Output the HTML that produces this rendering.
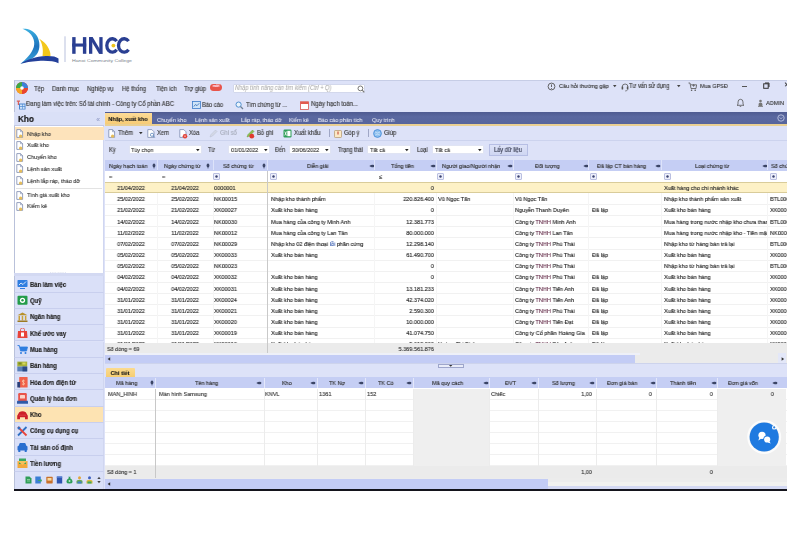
<!DOCTYPE html>
<html><head><meta charset="utf-8">
<style>
*{margin:0;padding:0;box-sizing:border-box}
html,body{width:800px;height:533px;overflow:hidden;background:#fff;font-family:"Liberation Sans",sans-serif;color:#2b2b2b}
.a{position:absolute}
.t{position:absolute;white-space:nowrap;line-height:1;-webkit-text-stroke:0.15px currentColor;will-change:transform}
</style></head><body>

<svg class="a" style="left:0;top:0" width="150" height="70" viewBox="0 0 150 70">
  <defs><linearGradient id="bl" x1="0" y1="0" x2="0" y2="1"><stop offset="0" stop-color="#3bb0e0"/><stop offset="0.5" stop-color="#1d72bd"/><stop offset="1" stop-color="#3aa5dc"/></linearGradient></defs>
  <path d="M22.5 28.8 C27 28.5 33 29.5 37 36 C40 41 40.5 49 37 54 C33 59 27 62 20.5 63.8 C26 59 31.5 54 33.8 47 C35.5 41 33 33 22.5 28.8 Z" fill="url(#bl)"/>
  <path d="M39 38.5 C45 42 49 47 50.3 53 L50.5 56 L42.5 56 C43.5 50 42.5 43 39 38.5 Z" fill="#f3c71a"/>
  <path d="M20.5 63.8 C27 59.5 36 56.5 46 56 C52 55.8 56 56.5 58.5 58.5 L58.5 63.2 C54 61 46 60.5 38 61 C31 61.5 25 62.5 20.5 63.8 Z" fill="#24409a"/>
  <rect x="64.5" y="36.3" width="1" height="25.7" fill="#b9c1de"/>
  <g fill="#2a3f92">
    <rect x="72.2" y="37.1" width="3.4" height="16.7"/><rect x="82.9" y="37.1" width="3.4" height="16.7"/><rect x="72.2" y="43.5" width="14" height="3.1"/>
    <rect x="89" y="37.1" width="3.3" height="16.7"/><rect x="99.3" y="37.1" width="3.3" height="16.7"/><path d="M89 37.1 H92.6 L102.6 53.8 H99 Z"/>
  </g>
  <path d="M116.69 41.14 A5.60 6.70 0 1 0 116.69 49.76" fill="none" stroke="#2a3f92" stroke-width="3.3"/><path d="M128.57 41.14 A5.70 6.70 0 1 0 128.57 49.76" fill="none" stroke="#2a3f92" stroke-width="3.3"/>
  <circle cx="113.4" cy="45.6" r="1.9" fill="#f0c419"/>
  <text x="72" y="61.5" font-family="Liberation Sans" font-size="4.2" fill="#7a7f8c" textLength="60" lengthAdjust="spacingAndGlyphs">Hanoi Community College</text>
</svg>

<div class="a" style="left:0;top:0;width:786.6px;height:533px;overflow:hidden">
<div class="a" style="left:14px;top:80px;width:773px;height:409px;background:#dde2f8;border-left:1px solid #b9c1da;border-top:0.7px solid #c6cde6"></div>
<svg class="a" style="left:15px;top:81px" width="14" height="14" viewBox="0 0 14 14"><circle cx="7" cy="7" r="6" fill="#e9452f"/>
<path d="M7 7 L7 1 A6 6 0 0 1 13 7 Z" fill="#3b82d9"/>
<path d="M7 7 L13 7 A6 6 0 0 1 7 13 Z" fill="#e9452f"/>
<path d="M7 7 L7 13 A6 6 0 0 1 1 7 Z" fill="#f5a623"/>
<path d="M7 7 L1 7 A6 6 0 0 1 7 1 Z" fill="#3aaa49"/>
<circle cx="7" cy="7" r="1.8" fill="#fff"/></svg>
<div class="t" style="top:85.50px;font-size:6.61px;color:#3a3a3a;left:34.40px;transform-origin:0 50%;transform:scaleX(0.8929);">Tệp</div>
<div class="t" style="top:85.50px;font-size:6.61px;color:#3a3a3a;left:51.60px;transform-origin:0 50%;transform:scaleX(0.8929);">Danh mục</div>
<div class="t" style="top:85.50px;font-size:6.61px;color:#3a3a3a;left:86.50px;transform-origin:0 50%;transform:scaleX(0.8929);">Nghiệp vụ</div>
<div class="t" style="top:85.50px;font-size:6.61px;color:#3a3a3a;left:122.00px;transform-origin:0 50%;transform:scaleX(0.8929);">Hệ thống</div>
<div class="t" style="top:85.50px;font-size:6.61px;color:#3a3a3a;left:156.00px;transform-origin:0 50%;transform:scaleX(0.8929);">Tiện ích</div>
<div class="t" style="top:85.50px;font-size:6.61px;color:#3a3a3a;left:184.00px;transform-origin:0 50%;transform:scaleX(0.8929);">Trợ giúp</div>
<div class="a" style="left:209.6px;top:83.8px;width:12.6px;height:6.8px;background:#e8544b;border-radius:3.4px"></div>
<div class="t" style="top:85.28px;font-size:3.81px;color:#fde;font-weight:bold;left:65.90px;width:300px;text-align:center;transform-origin:50% 50%;transform:scaleX(0.8929);">mới</div>
<div class="a" style="left:232.8px;top:83.6px;width:132.2px;height:9.6px;background:#fff;border:0.7px solid #d3d8ec;border-radius:1px"></div>
<div class="t" style="top:85.28px;font-size:6.27px;color:#a9a9a9;font-style:italic;left:235.00px;transform-origin:0 50%;transform:scaleX(0.8929);-webkit-text-stroke:0.05px currentColor;">Nhập tính năng cần tìm kiếm (Ctrl + Q)</div>
<svg class="a" style="left:357px;top:84.5px" width="8" height="8" viewBox="0 0 8 8"><circle cx="3.4" cy="3.4" r="2.4" fill="none" stroke="#777" stroke-width="1"/><path d="M5.2 5.2 L7.3 7.3" stroke="#777" stroke-width="1.2"/></svg>
<svg class="a" style="left:546.5px;top:82.2px" width="9" height="9" viewBox="0 0 9 9"><circle cx="4.5" cy="4.5" r="3.4" fill="none" stroke="#555" stroke-width="0.9"/><path d="M4.5 2.4 V5" stroke="#555" stroke-width="0.9"/><circle cx="4.5" cy="6.4" r="0.5" fill="#555"/></svg>
<div class="t" style="top:83.31px;font-size:6.22px;color:#3a3a3a;left:558.50px;transform-origin:0 50%;transform:scaleX(0.8929);">Câu hỏi thường gặp</div>
<svg class="a" style="left:613px;top:84.8px" width="4" height="3" viewBox="0 0 4 3"><path d="M0 0 H3.5 L1.75 2.2Z" fill="#444"/></svg>
<svg class="a" style="left:620.5px;top:81.8px" width="8" height="10" viewBox="0 0 8 10"><path d="M1.2 5 A2.9 3 0 0 1 7 5" fill="none" stroke="#555" stroke-width="0.8"/><rect x="0.6" y="4.6" width="1.6" height="3" rx="0.5" fill="#555"/><rect x="5.8" y="4.6" width="1.6" height="3" rx="0.5" fill="#555"/><path d="M6.6 7.6 Q6.6 9 4 9" fill="none" stroke="#555" stroke-width="0.6"/></svg>
<div class="t" style="top:83.23px;font-size:6.35px;color:#3a3a3a;left:629.40px;transform-origin:0 50%;transform:scaleX(0.8929);">Tư vấn sử dụng</div>
<svg class="a" style="left:676.5px;top:84.8px" width="4" height="3" viewBox="0 0 4 3"><path d="M0 0 H3.5 L1.75 2.2Z" fill="#444"/></svg>
<svg class="a" style="left:687.5px;top:81.5px" width="9" height="10" viewBox="0 0 9 10"><path d="M0.5 1 H2 L3 6.5 H8 L8.6 2.8 H2.6" fill="none" stroke="#555" stroke-width="0.8"/><circle cx="3.6" cy="8.2" r="0.8" fill="#555"/><circle cx="7.2" cy="8.2" r="0.8" fill="#555"/><path d="M5.6 2 V5 M4.3 3.5 H6.9" stroke="#555" stroke-width="0.6"/></svg>
<div class="t" style="top:83.34px;font-size:6.16px;color:#3a3a3a;left:700.00px;transform-origin:0 50%;transform:scaleX(0.8929);">Mua GPSĐ</div>
<div class="a" style="left:742px;top:85.5px;width:5px;height:0.9px;background:#555;"></div>
<svg class="a" style="left:762.5px;top:82.3px" width="7" height="7" viewBox="0 0 7 7"><rect x="0.7" y="1.8" width="4.5" height="4.5" fill="none" stroke="#333" stroke-width="1"/><path d="M2 1 H6 V5" fill="none" stroke="#333" stroke-width="1"/></svg>
<div class="t" style="top:82.24px;font-size:6.72px;color:#333;left:783.60px;transform-origin:0 50%;transform:scaleX(0.8929);">✕</div>
<svg class="a" style="left:15.5px;top:100px" width="10" height="10" viewBox="0 0 10 10"><path d="M0.8 0.5 H4 V1.8 H3 V5 H1.8 V1.8 H0.8Z" fill="#d9605a"/><rect x="3" y="3.5" width="6.5" height="6" fill="#4a86d0"/><rect x="4" y="4.5" width="2" height="1.8" fill="#cfe3fb"/><rect x="6.6" y="4.5" width="2" height="1.8" fill="#cfe3fb"/><rect x="4" y="7" width="2" height="1.8" fill="#cfe3fb"/><rect x="6.6" y="7" width="2" height="1.8" fill="#cfe3fb"/></svg>
<div class="t" style="top:101.46px;font-size:6.68px;color:#3a3a3a;left:26.00px;transform-origin:0 50%;transform:scaleX(0.8929);">Đang làm việc trên: Sổ tài chính - Công ty Cổ phần ABC</div>
<svg class="a" style="left:191.5px;top:101px" width="9" height="8" viewBox="0 0 9 8"><rect x="0.5" y="0.5" width="8" height="7" fill="#cfe3f7" stroke="#3d7cc9" stroke-width="0.8"/><path d="M1.8 5.5 L3.5 3.5 L5 4.7 L7.2 2.3" fill="none" stroke="#2d67b5" stroke-width="0.8"/></svg>
<div class="t" style="top:101.60px;font-size:6.41px;color:#3a3a3a;left:202.00px;transform-origin:0 50%;transform:scaleX(0.8929);">Báo cáo</div>
<svg class="a" style="left:235px;top:100.5px" width="9" height="9" viewBox="0 0 9 9"><circle cx="3.6" cy="3.6" r="2.6" fill="#eaf3fb" stroke="#4f8fcf" stroke-width="1"/><path d="M5.5 5.5 L8 8" stroke="#6d7f96" stroke-width="1.3"/></svg>
<div class="t" style="top:101.60px;font-size:6.41px;color:#3a3a3a;left:246.00px;transform-origin:0 50%;transform:scaleX(0.8929);">Tìm chứng từ ...</div>
<svg class="a" style="left:299.5px;top:100.7px" width="9" height="9" viewBox="0 0 9 9"><rect x="0.5" y="0.8" width="8" height="7.6" fill="#fff" stroke="#d9534f" stroke-width="0.8"/><rect x="0.5" y="0.8" width="8" height="2.2" fill="#e25a4f"/></svg>
<div class="t" style="top:101.44px;font-size:6.72px;color:#3a3a3a;left:310.70px;transform-origin:0 50%;transform:scaleX(0.8929);">Ngày hạch toán...</div>
<svg class="a" style="left:735.5px;top:98.3px" width="9" height="9" viewBox="0 0 9 9"><path d="M2 6.5 V4 A2.5 2.7 0 0 1 7 4 V6.5 L8 7.3 H1 Z" fill="none" stroke="#555" stroke-width="0.8"/><path d="M3.6 8 A1 1 0 0 0 5.4 8" fill="none" stroke="#555" stroke-width="0.7"/></svg>
<svg class="a" style="left:757.5px;top:99.3px" width="5" height="8" viewBox="0 0 5 8"><circle cx="2.5" cy="2" r="1.3" fill="#777"/><path d="M0.6 7 V5 A1.9 1.5 0 0 1 4.4 5 V7Z" fill="#777"/><rect x="0" y="7" width="5" height="0.8" fill="#777"/></svg>
<div class="t" style="top:100.08px;font-size:6.26px;color:#3a3a3a;left:766.00px;transform-origin:0 50%;transform:scaleX(0.8929);">ADMIN</div>
<div class="a" style="left:14px;top:112px;width:90px;height:14px;background:#dae0f7;"></div>
<div class="t" style="top:115.13px;font-size:9.18px;color:#111;font-weight:bold;left:17.50px;transform-origin:0 50%;transform:scaleX(0.8929);">Kho</div>
<div class="t" style="top:116.74px;font-size:6.72px;color:#9aa3cc;left:-51.70px;width:300px;text-align:center;transform-origin:50% 50%;transform:scaleX(0.8929);">«</div>
<div class="a" style="left:14px;top:126px;width:90px;height:146.5px;background:#fff;border-left:1px solid #b9c1da;border-right:1px solid #d0d6f0"></div>
<div class="a" style="left:15px;top:127.4px;width:88.5px;height:12.3px;background:#fde3bb;"></div>
<div class="a" style="left:14px;top:125.2px;width:90px;height:0.8px;background:#c3cae6;"></div>
<svg class="a" style="left:16px;top:129.4px" width="8" height="9" viewBox="0 0 8 9"><path d="M0.8 0.6 H4.5 L6.6 2.7 V8.4 H0.8 Z" fill="#fff" stroke="#7584aa" stroke-width="0.75"/><path d="M4.5 0.6 V2.7 H6.6" fill="none" stroke="#7584aa" stroke-width="0.6"/><circle cx="4.6" cy="7.2" r="1.6" fill="#e6bd5a"/></svg>
<div class="t" style="top:130.71px;font-size:6.22px;color:#3a3a3a;left:26.90px;transform-origin:0 50%;transform:scaleX(0.8929);">Nhập kho</div>
<svg class="a" style="left:16px;top:141.0px" width="8" height="9" viewBox="0 0 8 9"><path d="M0.8 0.6 H4.5 L6.6 2.7 V8.4 H0.8 Z" fill="#fff" stroke="#7584aa" stroke-width="0.75"/><path d="M4.5 0.6 V2.7 H6.6" fill="none" stroke="#7584aa" stroke-width="0.6"/><circle cx="4.6" cy="7.2" r="1.6" fill="#e6bd5a"/></svg>
<div class="t" style="top:142.31px;font-size:6.22px;color:#3a3a3a;left:26.90px;transform-origin:0 50%;transform:scaleX(0.8929);">Xuất kho</div>
<svg class="a" style="left:16px;top:152.9px" width="8" height="9" viewBox="0 0 8 9"><path d="M0.8 0.6 H4.5 L6.6 2.7 V8.4 H0.8 Z" fill="#fff" stroke="#7584aa" stroke-width="0.75"/><path d="M4.5 0.6 V2.7 H6.6" fill="none" stroke="#7584aa" stroke-width="0.6"/><circle cx="4.6" cy="7.2" r="1.6" fill="#e6bd5a"/></svg>
<div class="t" style="top:154.21px;font-size:6.22px;color:#3a3a3a;left:26.90px;transform-origin:0 50%;transform:scaleX(0.8929);">Chuyển kho</div>
<svg class="a" style="left:16px;top:164.4px" width="8" height="9" viewBox="0 0 8 9"><path d="M0.8 0.6 H4.5 L6.6 2.7 V8.4 H0.8 Z" fill="#fff" stroke="#7584aa" stroke-width="0.75"/><path d="M4.5 0.6 V2.7 H6.6" fill="none" stroke="#7584aa" stroke-width="0.6"/><circle cx="4.6" cy="7.2" r="1.6" fill="#e6bd5a"/></svg>
<div class="t" style="top:165.71px;font-size:6.22px;color:#3a3a3a;left:26.90px;transform-origin:0 50%;transform:scaleX(0.8929);">Lệnh sản xuất</div>
<svg class="a" style="left:16px;top:176.4px" width="8" height="9" viewBox="0 0 8 9"><path d="M0.8 0.6 H4.5 L6.6 2.7 V8.4 H0.8 Z" fill="#fff" stroke="#7584aa" stroke-width="0.75"/><path d="M4.5 0.6 V2.7 H6.6" fill="none" stroke="#7584aa" stroke-width="0.6"/><circle cx="4.6" cy="7.2" r="1.6" fill="#e6bd5a"/></svg>
<div class="t" style="top:177.71px;font-size:6.22px;color:#3a3a3a;left:26.90px;transform-origin:0 50%;transform:scaleX(0.8929);">Lệnh lắp ráp, tháo dỡ</div>
<svg class="a" style="left:16px;top:190.8px" width="8" height="9" viewBox="0 0 8 9"><path d="M0.8 0.6 H4.5 L6.6 2.7 V8.4 H0.8 Z" fill="#fff" stroke="#7584aa" stroke-width="0.75"/><path d="M4.5 0.6 V2.7 H6.6" fill="none" stroke="#7584aa" stroke-width="0.6"/><circle cx="4.6" cy="7.2" r="1.6" fill="#e6bd5a"/></svg>
<div class="t" style="top:192.11px;font-size:6.22px;color:#3a3a3a;left:26.90px;transform-origin:0 50%;transform:scaleX(0.8929);">Tính giá xuất kho</div>
<svg class="a" style="left:16px;top:202.0px" width="8" height="9" viewBox="0 0 8 9"><path d="M0.8 0.6 H4.5 L6.6 2.7 V8.4 H0.8 Z" fill="#fff" stroke="#7584aa" stroke-width="0.75"/><path d="M4.5 0.6 V2.7 H6.6" fill="none" stroke="#7584aa" stroke-width="0.6"/><circle cx="4.6" cy="7.2" r="1.6" fill="#e6bd5a"/></svg>
<div class="t" style="top:203.31px;font-size:6.22px;color:#3a3a3a;left:26.90px;transform-origin:0 50%;transform:scaleX(0.8929);">Kiểm kê</div>
<div class="a" style="left:16px;top:187.8px;width:86px;height:0.6px;background:#e3e3e3;"></div>
<div class="a" style="left:14px;top:272.5px;width:90px;height:3.8px;background:#d3d9f2;"></div>
<div class="t" style="top:272.42px;font-size:3.36px;color:#a9b1d6;left:-92.00px;width:300px;text-align:center;transform-origin:50% 50%;transform:scaleX(0.8929);">· · · · · · · · ·</div>
<div class="a" style="left:14px;top:276.3px;width:90px;height:16.3px;background:#dae0f8;border-left:1px solid #b9c1da;border-right:1px solid #d0d6f0;border-bottom:0.6px solid #c8cfee"></div>
<svg class="a" style="left:16.5px;top:279.1px" width="11" height="11" viewBox="0 0 11 11"><rect x="0.5" y="1" width="10" height="7" rx="0.8" fill="#2f7ee0"/><path d="M2 6 L4 4 L6 5.5 L9 2.5" fill="none" stroke="#fff" stroke-width="0.8"/><path d="M3 9.5 H8" stroke="#2f7ee0" stroke-width="1"/></svg>
<div class="t" style="top:281.70px;font-size:6.61px;color:#222;font-weight:bold;left:30.30px;transform-origin:0 50%;transform:scaleX(0.8929);">Bàn làm việc</div>
<div class="a" style="left:14px;top:292.6px;width:90px;height:16.3px;background:#dae0f8;border-left:1px solid #b9c1da;border-right:1px solid #d0d6f0;border-bottom:0.6px solid #c8cfee"></div>
<svg class="a" style="left:16.5px;top:295.4px" width="11" height="11" viewBox="0 0 11 11"><rect x="0.5" y="0.8" width="10" height="9" rx="1" fill="#239c4a"/><circle cx="5.5" cy="5.3" r="2.6" fill="#fff"/><circle cx="5.5" cy="5.3" r="1.2" fill="#239c4a"/></svg>
<div class="t" style="top:298.00px;font-size:6.61px;color:#222;font-weight:bold;left:30.30px;transform-origin:0 50%;transform:scaleX(0.8929);">Quỹ</div>
<div class="a" style="left:14px;top:308.9px;width:90px;height:16.3px;background:#dae0f8;border-left:1px solid #b9c1da;border-right:1px solid #d0d6f0;border-bottom:0.6px solid #c8cfee"></div>
<svg class="a" style="left:16.5px;top:311.7px" width="11" height="11" viewBox="0 0 11 11"><path d="M0.5 3.3 L5.5 0.5 L10.5 3.3 Z" fill="#b8902c"/><rect x="1.5" y="3.8" width="1.5" height="4.5" fill="#c9a23a"/><rect x="4.7" y="3.8" width="1.5" height="4.5" fill="#c9a23a"/><rect x="7.9" y="3.8" width="1.5" height="4.5" fill="#c9a23a"/><rect x="0.5" y="8.5" width="10" height="1.5" fill="#9c7a22"/></svg>
<div class="t" style="top:314.30px;font-size:6.61px;color:#222;font-weight:bold;left:30.30px;transform-origin:0 50%;transform:scaleX(0.8929);">Ngân hàng</div>
<div class="a" style="left:14px;top:325.2px;width:90px;height:16.3px;background:#dae0f8;border-left:1px solid #b9c1da;border-right:1px solid #d0d6f0;border-bottom:0.6px solid #c8cfee"></div>
<svg class="a" style="left:16.5px;top:328.0px" width="11" height="11" viewBox="0 0 11 11"><path d="M1 3 H10 L10.5 10 H0.5 Z" fill="#e8433a"/><path d="M3.5 3 V1.5 A2 1.5 0 0 1 7.5 1.5 V3" fill="none" stroke="#e8433a" stroke-width="0.8"/><rect x="4" y="4.5" width="3" height="4" fill="#fff"/></svg>
<div class="t" style="top:330.60px;font-size:6.61px;color:#222;font-weight:bold;left:30.30px;transform-origin:0 50%;transform:scaleX(0.8929);">Khế ước vay</div>
<div class="a" style="left:14px;top:341.5px;width:90px;height:16.3px;background:#dae0f8;border-left:1px solid #b9c1da;border-right:1px solid #d0d6f0;border-bottom:0.6px solid #c8cfee"></div>
<svg class="a" style="left:16.5px;top:344.3px" width="11" height="11" viewBox="0 0 11 11"><path d="M0.5 1.5 H2.3 L3.5 7 H9.5 L10.5 3 H3" fill="#2f7ee0" stroke="#2f7ee0" stroke-width="0.8"/><circle cx="4" cy="9" r="1" fill="#2f7ee0"/><circle cx="8.5" cy="9" r="1" fill="#2f7ee0"/></svg>
<div class="t" style="top:346.90px;font-size:6.61px;color:#222;font-weight:bold;left:30.30px;transform-origin:0 50%;transform:scaleX(0.8929);">Mua hàng</div>
<div class="a" style="left:14px;top:357.8px;width:90px;height:16.3px;background:#dae0f8;border-left:1px solid #b9c1da;border-right:1px solid #d0d6f0;border-bottom:0.6px solid #c8cfee"></div>
<svg class="a" style="left:16.5px;top:360.6px" width="11" height="11" viewBox="0 0 11 11"><rect x="0.3" y="0.6" width="9.9" height="5" fill="#a9b23a"/><rect x="1.5" y="1.5" width="3" height="2" fill="#7a8a20"/><rect x="5.5" y="1.5" width="3" height="2" fill="#d5d860"/><rect x="0.3" y="5.6" width="9.9" height="4.8" fill="#5b80b8"/><rect x="5.5" y="5.6" width="4.7" height="4.8" fill="#2b4a88"/></svg>
<div class="t" style="top:363.20px;font-size:6.61px;color:#222;font-weight:bold;left:30.30px;transform-origin:0 50%;transform:scaleX(0.8929);">Bán hàng</div>
<div class="a" style="left:14px;top:374.1px;width:90px;height:16.3px;background:#dae0f8;border-left:1px solid #b9c1da;border-right:1px solid #d0d6f0;border-bottom:0.6px solid #c8cfee"></div>
<svg class="a" style="left:16.5px;top:376.9px" width="11" height="11" viewBox="0 0 11 11"><rect x="2.2" y="0" width="8.4" height="10.5" rx="0.6" fill="#f0604a"/><path d="M6.4 2.5 V8.5 M7.8 4 Q6.4 3 5 4 Q6.4 5.5 7.8 7 Q6.4 8 5 7" fill="none" stroke="#fbd0b0" stroke-width="0.7"/><rect x="0.3" y="5" width="2.8" height="5.5" fill="#2b3f7a"/></svg>
<div class="t" style="top:379.50px;font-size:6.61px;color:#222;font-weight:bold;left:30.30px;transform-origin:0 50%;transform:scaleX(0.8929);">Hóa đơn điện tử</div>
<div class="a" style="left:14px;top:390.4px;width:90px;height:16.3px;background:#dae0f8;border-left:1px solid #b9c1da;border-right:1px solid #d0d6f0;border-bottom:0.6px solid #c8cfee"></div>
<svg class="a" style="left:16.5px;top:393.2px" width="11" height="11" viewBox="0 0 11 11"><rect x="1.2" y="0" width="8.6" height="9" rx="1.2" fill="#e8544a"/><rect x="3" y="2" width="5" height="3.5" rx="0.5" fill="#fbd5c8"/><rect x="0" y="7.8" width="11" height="3" rx="0.4" fill="#2f5aa8"/></svg>
<div class="t" style="top:395.80px;font-size:6.61px;color:#222;font-weight:bold;left:30.30px;transform-origin:0 50%;transform:scaleX(0.8929);">Quản lý hóa đơn</div>
<div class="a" style="left:14px;top:406.7px;width:90px;height:16.3px;background:#fde3b2;border-left:1px solid #b9c1da;border-right:1px solid #d0d6f0;border-bottom:0.6px solid #c8cfee"></div>
<svg class="a" style="left:16.5px;top:409.5px" width="11" height="11" viewBox="0 0 11 11"><path d="M0.2 9.3 V5.8 L2.2 2.2 Q5.5 0.4 8.8 2.2 L10.8 5.8 V9.3 H8 V7.2 H3 V9.3 Z" fill="#cc1f2a"/><path d="M2 5.2 H9" stroke="#e24a50" stroke-width="0.7"/></svg>
<div class="t" style="top:412.10px;font-size:6.61px;color:#222;font-weight:bold;left:30.30px;transform-origin:0 50%;transform:scaleX(0.8929);">Kho</div>
<div class="a" style="left:14px;top:423.0px;width:90px;height:16.3px;background:#dae0f8;border-left:1px solid #b9c1da;border-right:1px solid #d0d6f0;border-bottom:0.6px solid #c8cfee"></div>
<svg class="a" style="left:16.5px;top:425.8px" width="11" height="11" viewBox="0 0 11 11"><path d="M1 9.5 L9.5 1" stroke="#2f6fc2" stroke-width="1.8"/><path d="M1 1 L9.5 9.5" stroke="#e8433a" stroke-width="1.8"/><circle cx="2" cy="2" r="1.5" fill="#2f6fc2"/></svg>
<div class="t" style="top:428.40px;font-size:6.61px;color:#222;font-weight:bold;left:30.30px;transform-origin:0 50%;transform:scaleX(0.8929);">Công cụ dụng cụ</div>
<div class="a" style="left:14px;top:439.3px;width:90px;height:16.3px;background:#dae0f8;border-left:1px solid #b9c1da;border-right:1px solid #d0d6f0;border-bottom:0.6px solid #c8cfee"></div>
<svg class="a" style="left:16.5px;top:442.1px" width="11" height="11" viewBox="0 0 11 11"><path d="M1.5 4 L2.8 1 H8.2 L9.5 4 Z" fill="#2a6fd0"/><rect x="0.5" y="4" width="10" height="4.5" rx="0.8" fill="#2a6fd0"/><rect x="1.3" y="8" width="2" height="2" fill="#2a6fd0"/><rect x="7.7" y="8" width="2" height="2" fill="#2a6fd0"/></svg>
<div class="t" style="top:444.70px;font-size:6.61px;color:#222;font-weight:bold;left:30.30px;transform-origin:0 50%;transform:scaleX(0.8929);">Tài sản cố định</div>
<div class="a" style="left:14px;top:455.6px;width:90px;height:16.3px;background:#dae0f8;border-left:1px solid #b9c1da;border-right:1px solid #d0d6f0;border-bottom:0.6px solid #c8cfee"></div>
<svg class="a" style="left:16.5px;top:458.4px" width="11" height="11" viewBox="0 0 11 11"><rect x="0.5" y="3" width="10" height="7" fill="#f2a93b"/><rect x="2" y="0.5" width="7" height="5.5" fill="#3aa860"/><path d="M0.5 3 L5.5 7 L10.5 3" fill="#f7c15c"/></svg>
<div class="t" style="top:461.00px;font-size:6.61px;color:#222;font-weight:bold;left:30.30px;transform-origin:0 50%;transform:scaleX(0.8929);">Tiền lương</div>
<div class="a" style="left:14px;top:471.9px;width:90px;height:17.1px;background:#dae0f8;border-left:1px solid #b9c1da;border-right:1px solid #d0d6f0"></div>
<svg class="a" style="left:25.1px;top:475.8px" width="7" height="8" viewBox="0 0 7 8"><path d="M0.5 0.5 H4.5 L6.5 2.5 V7.5 H0.5Z" fill="#2f9e58"/><path d="M2 3.5 H5 M2 5 H5" stroke="#bfe8c9" stroke-width="0.6"/></svg>
<svg class="a" style="left:35.3px;top:475.8px" width="7" height="8" viewBox="0 0 7 8"><rect x="0.3" y="0.5" width="5.5" height="7" fill="#3a7fd5"/><path d="M3 4.5 H6.7 L5.5 3 M6.7 4.5 L5.5 6" fill="none" stroke="#3aa860" stroke-width="0.9"/></svg>
<svg class="a" style="left:45.5px;top:475.8px" width="7" height="8" viewBox="0 0 7 8"><rect x="0.3" y="0.8" width="6.4" height="6.6" rx="0.6" fill="#c8702a"/><rect x="1.5" y="2" width="4" height="2.6" fill="#f7d9a0"/></svg>
<svg class="a" style="left:55.7px;top:475.8px" width="7" height="8" viewBox="0 0 7 8"><rect x="0.8" y="0.5" width="5.4" height="7" fill="#2f55b0"/><rect x="0.8" y="0.5" width="5.4" height="1.3" fill="#5b86d8"/></svg>
<svg class="a" style="left:65.9px;top:475.8px" width="7" height="8" viewBox="0 0 7 8"><path d="M2.2 0.8 H4.8 L4 2 Q6.8 3.5 6.6 6 Q6.4 7.5 3.5 7.5 Q0.6 7.5 0.4 6 Q0.2 3.5 3 2Z" fill="#2e9e57"/><circle cx="3.5" cy="5" r="1" fill="#bfe8c9"/></svg>
<svg class="a" style="left:76.1px;top:475.8px" width="7" height="8" viewBox="0 0 7 8"><circle cx="3.5" cy="1.8" r="1.5" fill="#e2a43a"/><path d="M0.5 7.5 V5.5 Q0.5 3.8 3.5 3.8 Q6.5 3.8 6.5 5.5 V7.5Z" fill="#6aa84f"/><rect x="1.5" y="5.5" width="4" height="2" fill="#3d7fd0"/></svg>
<svg class="a" style="left:86.3px;top:475.8px" width="7" height="8" viewBox="0 0 7 8"><circle cx="3.5" cy="1.8" r="1.5" fill="#3d5fc0"/><path d="M0.5 7.5 V5.5 Q0.5 3.8 3.5 3.8 Q6.5 3.8 6.5 5.5 V7.5Z" fill="#d9b83a"/><rect x="1.5" y="5.5" width="4" height="2" fill="#3aa860"/></svg>
<svg class="a" style="left:97.4px;top:475.5px" width="4" height="8" viewBox="0 0 4 8"><path d="M0.3 3 L2 0.8 L3.7 3Z M0.3 5 L2 7.2 L3.7 5Z" fill="#444"/></svg>
<div class="a" style="left:104.5px;top:112px;width:682.5px;height:12.3px;background:linear-gradient(#4f5b91,#5a68a0 40%,#56649c);"></div>
<div class="a" style="left:104.5px;top:124.1px;width:682.5px;height:1.5px;background:#e9cf92;"></div>
<div class="a" style="left:104.5px;top:112.5px;width:47.5px;height:11.5px;background:linear-gradient(#fcdc98,#f7cb75);"></div>
<div class="t" style="top:116.24px;font-size:6.16px;color:#1d1d1d;font-weight:bold;left:-21.80px;width:300px;text-align:center;transform-origin:50% 50%;transform:scaleX(0.8929);">Nhập, xuất kho</div>
<div class="t" style="top:116.64px;font-size:6.16px;color:#e4e7f4;left:156.50px;transform-origin:0 50%;transform:scaleX(0.8929);-webkit-text-stroke:0.05px currentColor;">Chuyển kho</div>
<div class="t" style="top:116.64px;font-size:6.16px;color:#e4e7f4;left:194.50px;transform-origin:0 50%;transform:scaleX(0.8929);-webkit-text-stroke:0.05px currentColor;">Lệnh sản xuất</div>
<div class="t" style="top:116.64px;font-size:6.16px;color:#e4e7f4;left:240.50px;transform-origin:0 50%;transform:scaleX(0.8929);-webkit-text-stroke:0.05px currentColor;">Lắp ráp, tháo dỡ</div>
<div class="t" style="top:116.64px;font-size:6.16px;color:#e4e7f4;left:288.50px;transform-origin:0 50%;transform:scaleX(0.8929);-webkit-text-stroke:0.05px currentColor;">Kiểm kê</div>
<div class="t" style="top:116.64px;font-size:6.16px;color:#e4e7f4;left:317.50px;transform-origin:0 50%;transform:scaleX(0.8929);-webkit-text-stroke:0.05px currentColor;">Báo cáo phân tích</div>
<div class="t" style="top:116.64px;font-size:6.16px;color:#e4e7f4;left:371.50px;transform-origin:0 50%;transform:scaleX(0.8929);-webkit-text-stroke:0.05px currentColor;">Quy trình</div>
<svg class="a" style="left:777.3px;top:114.1px" width="8" height="8" viewBox="0 0 8 8"><circle cx="4" cy="4" r="3.2" fill="none" stroke="#c9d0ea" stroke-width="0.8"/><path d="M2.6 3.4 L4 4.8 L5.4 3.4" fill="none" stroke="#c9d0ea" stroke-width="0.7"/></svg>
<svg class="a" style="left:108px;top:128.8px" width="8" height="9" viewBox="0 0 8 9"><path d="M0.8 0.6 H4.5 L6.6 2.7 V8.4 H0.8 Z" fill="#fff" stroke="#7584aa" stroke-width="0.75"/><path d="M4.5 0.6 V2.7 H6.6" fill="none" stroke="#7584aa" stroke-width="0.6"/><circle cx="4.6" cy="7.2" r="1.6" fill="#e6bd5a"/></svg>
<div class="t" style="top:129.82px;font-size:6.57px;color:#3a3a3a;left:117.80px;transform-origin:0 50%;transform:scaleX(0.8929);">Thêm</div>
<svg class="a" style="left:139px;top:132.10000000000002px" width="4" height="3" viewBox="0 0 4 3"><path d="M0 0 H3.6 L1.8 2.3Z" fill="#333"/></svg>
<svg class="a" style="left:147px;top:128.8px" width="9" height="9" viewBox="0 0 9 9"><path d="M0.8 0.6 H4.8 L7 2.8 V8.4 H0.8 Z" fill="#fff" stroke="#6f7fa8" stroke-width="0.7"/><circle cx="5" cy="5.8" r="1.6" fill="none" stroke="#4a78b5" stroke-width="0.7"/><path d="M6.1 6.9 L7.8 8.6" stroke="#4a78b5" stroke-width="0.8"/></svg>
<div class="t" style="top:129.86px;font-size:6.50px;color:#3a3a3a;left:156.80px;transform-origin:0 50%;transform:scaleX(0.8929);">Xem</div>
<svg class="a" style="left:178.5px;top:128.70000000000002px" width="9" height="10" viewBox="0 0 9 10"><path d="M0.8 0.6 H4.8 L7 2.8 V8.4 H0.8 Z" fill="#fff" stroke="#6f7fa8" stroke-width="0.7"/><circle cx="6" cy="7.3" r="2.3" fill="#e03b30"/><path d="M5 6.3 L7 8.3 M7 6.3 L5 8.3" stroke="#fff" stroke-width="0.5"/></svg>
<div class="t" style="top:129.86px;font-size:6.50px;color:#3a3a3a;left:189.00px;transform-origin:0 50%;transform:scaleX(0.8929);">Xóa</div>
<svg class="a" style="left:208.5px;top:128.8px" width="9" height="9" viewBox="0 0 9 9"><path d="M1 8 L2 5.5 L6.5 1 L8 2.5 L3.5 7 Z" fill="#d4d8e6" stroke="#b6bccf" stroke-width="0.5"/></svg>
<div class="t" style="top:129.86px;font-size:6.50px;color:#a8adbc;left:220.00px;transform-origin:0 50%;transform:scaleX(0.8929);">Ghi sổ</div>
<svg class="a" style="left:246px;top:128.70000000000002px" width="9" height="10" viewBox="0 0 9 10"><path d="M1 8 L2 5.5 L6.5 1 L8 2.5 L3.5 7 Z" fill="#8cc152" stroke="#6a9a3a" stroke-width="0.5"/><circle cx="5.8" cy="7.2" r="2.4" fill="#e03b30"/></svg>
<div class="t" style="top:129.86px;font-size:6.50px;color:#3a3a3a;left:256.60px;transform-origin:0 50%;transform:scaleX(0.8929);">Bỏ ghi</div>
<svg class="a" style="left:282.5px;top:129.0px" width="9" height="9" viewBox="0 0 9 9"><rect x="0.5" y="0.5" width="8" height="8" rx="1.2" fill="#2e9e57"/><rect x="4.3" y="1.8" width="3.2" height="5.4" fill="#fff"/><path d="M1.8 2.5 L3.5 6.5 M3.5 2.5 L1.8 6.5" stroke="#fff" stroke-width="0.8"/></svg>
<div class="t" style="top:129.80px;font-size:6.61px;color:#3a3a3a;left:293.50px;transform-origin:0 50%;transform:scaleX(0.8929);">Xuất khẩu</div>
<div class="a" style="left:328.5px;top:129.3px;width:0.8px;height:8px;background:#a0a7c6;"></div>
<svg class="a" style="left:333.5px;top:129.0px" width="8" height="9" viewBox="0 0 8 9"><rect x="0.5" y="1.5" width="7" height="7" rx="0.8" fill="#fbe9c6" stroke="#a98a55" stroke-width="0.6"/><path d="M4 2.5 V5.5" stroke="#c0392b" stroke-width="1"/></svg>
<div class="t" style="top:129.86px;font-size:6.50px;color:#3a3a3a;left:343.80px;transform-origin:0 50%;transform:scaleX(0.8929);">Góp ý</div>
<div class="a" style="left:367.5px;top:129.3px;width:0.8px;height:8px;background:#a0a7c6;"></div>
<svg class="a" style="left:373.3px;top:129.10000000000002px" width="9" height="9" viewBox="0 0 9 9"><circle cx="4.5" cy="4.5" r="3.9" fill="#8fc1ef" stroke="#3d86d6" stroke-width="0.8"/><path d="M2 3 Q4.5 5 7 3 M2.2 6 Q4.5 4.5 6.8 6" fill="none" stroke="#e9f3fd" stroke-width="0.5"/></svg>
<div class="t" style="top:129.86px;font-size:6.50px;color:#3a3a3a;left:383.50px;transform-origin:0 50%;transform:scaleX(0.8929);">Giúp</div>
<div class="a" style="left:104.5px;top:140.3px;width:682.5px;height:0.6px;background:#ccd3ee;"></div>
<div class="t" style="top:147.28px;font-size:6.27px;color:#3a3a3a;left:109.40px;transform-origin:0 50%;transform:scaleX(0.8929);">Kỳ</div>
<div class="a" style="left:128.5px;top:144.5px;width:73.69999999999999px;height:9.6px;background:#fff;border:0.6px solid #e0e4f3"></div>
<div class="t" style="top:147.36px;font-size:6.10px;color:#3a3a3a;left:131.10px;transform-origin:0 50%;transform:scaleX(0.8929);">Tùy chọn</div>
<svg class="a" style="left:196.2px;top:148.7px" width="4" height="3" viewBox="0 0 4 3"><path d="M0 0 H3.6 L1.8 2.3Z" fill="#222"/></svg>
<div class="t" style="top:147.28px;font-size:6.27px;color:#3a3a3a;left:208.00px;transform-origin:0 50%;transform:scaleX(0.8929);">Từ</div>
<div class="a" style="left:227.9px;top:144.5px;width:42.400000000000006px;height:9.6px;background:#fff;border:0.6px solid #e0e4f3"></div>
<div class="t" style="top:147.36px;font-size:6.10px;color:#3a3a3a;left:230.50px;transform-origin:0 50%;transform:scaleX(0.8929);">01/01/2022</div>
<svg class="a" style="left:264.3px;top:148.7px" width="4" height="3" viewBox="0 0 4 3"><path d="M0 0 H3.6 L1.8 2.3Z" fill="#222"/></svg>
<div class="t" style="top:147.28px;font-size:6.27px;color:#3a3a3a;left:275.30px;transform-origin:0 50%;transform:scaleX(0.8929);">Đến</div>
<div class="a" style="left:289.4px;top:144.5px;width:41.30000000000001px;height:9.6px;background:#fff;border:0.6px solid #e0e4f3"></div>
<div class="t" style="top:147.36px;font-size:6.10px;color:#3a3a3a;left:292.00px;transform-origin:0 50%;transform:scaleX(0.8929);">30/06/2022</div>
<svg class="a" style="left:324.7px;top:148.7px" width="4" height="3" viewBox="0 0 4 3"><path d="M0 0 H3.6 L1.8 2.3Z" fill="#222"/></svg>
<div class="t" style="top:147.28px;font-size:6.27px;color:#3a3a3a;left:338.20px;transform-origin:0 50%;transform:scaleX(0.8929);">Trạng thái</div>
<div class="a" style="left:367.1px;top:144.5px;width:43.89999999999998px;height:9.6px;background:#fff;border:0.6px solid #e0e4f3"></div>
<div class="t" style="top:147.36px;font-size:6.10px;color:#3a3a3a;left:369.70px;transform-origin:0 50%;transform:scaleX(0.8929);">Tất cả</div>
<svg class="a" style="left:405px;top:148.7px" width="4" height="3" viewBox="0 0 4 3"><path d="M0 0 H3.6 L1.8 2.3Z" fill="#222"/></svg>
<div class="t" style="top:147.28px;font-size:6.27px;color:#3a3a3a;left:417.20px;transform-origin:0 50%;transform:scaleX(0.8929);">Loại</div>
<div class="a" style="left:432.2px;top:144.5px;width:52.0px;height:9.6px;background:#fff;border:0.6px solid #e0e4f3"></div>
<div class="t" style="top:147.36px;font-size:6.10px;color:#3a3a3a;left:434.80px;transform-origin:0 50%;transform:scaleX(0.8929);">Tất cả</div>
<svg class="a" style="left:478.2px;top:148.7px" width="4" height="3" viewBox="0 0 4 3"><path d="M0 0 H3.6 L1.8 2.3Z" fill="#222"/></svg>
<div class="a" style="left:489px;top:144.1px;width:38.6px;height:12px;background:linear-gradient(#dde2f7,#cfd6f2);border:0.7px solid #b6bee4"></div>
<div class="t" style="top:147.34px;font-size:6.34px;color:#3a3f55;left:494.00px;transform-origin:0 50%;transform:scaleX(0.8929);">Lấy dữ liệu</div>
<div class="a" style="left:104.5px;top:159.7px;width:682.0px;height:194px;background:#fff;"></div>
<div class="a" style="left:104.5px;top:159.8px;width:682.0px;height:11.4px;background:#c5cef4;"></div>
<div class="a" style="left:104.5px;top:170.6px;width:682.0px;height:0.7px;background:#b5bee3;"></div>
<div class="t" style="top:162.54px;font-size:6.16px;color:#333;left:109.00px;transform-origin:0 50%;transform:scaleX(0.8929);">Ngày hạch toán</div>
<div class="t" style="top:162.54px;font-size:6.16px;color:#333;left:163.80px;transform-origin:0 50%;transform:scaleX(0.8929);">Ngày chứng từ</div>
<div class="t" style="top:162.54px;font-size:6.16px;color:#333;left:222.90px;transform-origin:0 50%;transform:scaleX(0.8929);">Số chứng từ</div>
<div class="t" style="top:162.54px;font-size:6.16px;color:#333;left:307.20px;transform-origin:0 50%;transform:scaleX(0.8929);">Diễn giải</div>
<div class="t" style="top:162.54px;font-size:6.16px;color:#333;left:390.60px;transform-origin:0 50%;transform:scaleX(0.8929);">Tổng tiền</div>
<div class="t" style="top:162.54px;font-size:6.16px;color:#333;left:442.20px;transform-origin:0 50%;transform:scaleX(0.8929);">Người giao/Người nhận</div>
<div class="t" style="top:162.54px;font-size:6.16px;color:#333;left:535.30px;transform-origin:0 50%;transform:scaleX(0.8929);">Đối tượng</div>
<div class="t" style="top:162.54px;font-size:6.16px;color:#333;left:597.20px;transform-origin:0 50%;transform:scaleX(0.8929);">Đã lập CT bán hàng</div>
<div class="t" style="top:162.54px;font-size:6.16px;color:#333;left:695.00px;transform-origin:0 50%;transform:scaleX(0.8929);">Loại chứng từ</div>
<div class="t" style="top:162.54px;font-size:6.16px;color:#333;left:771.00px;transform-origin:0 50%;transform:scaleX(0.8929);">Số chứng từ</div>
<svg class="a" style="left:152.4px;top:162.8px" width="4" height="6" viewBox="0 0 4 6"><ellipse cx="2" cy="2.6" rx="1.4" ry="2" fill="#3b4566"/><path d="M2 4 V5.6" stroke="#3b4566" stroke-width="0.6"/></svg>
<svg class="a" style="left:205.9px;top:162.8px" width="4" height="6" viewBox="0 0 4 6"><ellipse cx="2" cy="2.6" rx="1.4" ry="2" fill="#3b4566"/><path d="M2 4 V5.6" stroke="#3b4566" stroke-width="0.6"/></svg>
<svg class="a" style="left:261.5px;top:162.8px" width="4" height="6" viewBox="0 0 4 6"><ellipse cx="2" cy="2.6" rx="1.4" ry="2" fill="#3b4566"/><path d="M2 4 V5.6" stroke="#3b4566" stroke-width="0.6"/></svg>
<svg class="a" style="left:369.3px;top:163.8px" width="6" height="4" viewBox="0 0 6 4"><path d="M0.3 2 L2 1 Q3.5 0.4 5 1 Q5.8 2 5 3 Q3.5 3.6 2 3 Z" fill="#3b4566"/></svg>
<svg class="a" style="left:429.8px;top:163.8px" width="6" height="4" viewBox="0 0 6 4"><path d="M0.3 2 L2 1 Q3.5 0.4 5 1 Q5.8 2 5 3 Q3.5 3.6 2 3 Z" fill="#3b4566"/></svg>
<svg class="a" style="left:506.8px;top:163.8px" width="6" height="4" viewBox="0 0 6 4"><path d="M0.3 2 L2 1 Q3.5 0.4 5 1 Q5.8 2 5 3 Q3.5 3.6 2 3 Z" fill="#3b4566"/></svg>
<svg class="a" style="left:583px;top:163.8px" width="6" height="4" viewBox="0 0 6 4"><path d="M0.3 2 L2 1 Q3.5 0.4 5 1 Q5.8 2 5 3 Q3.5 3.6 2 3 Z" fill="#3b4566"/></svg>
<svg class="a" style="left:655.2px;top:163.8px" width="6" height="4" viewBox="0 0 6 4"><path d="M0.3 2 L2 1 Q3.5 0.4 5 1 Q5.8 2 5 3 Q3.5 3.6 2 3 Z" fill="#3b4566"/></svg>
<svg class="a" style="left:762.4px;top:163.8px" width="6" height="4" viewBox="0 0 6 4"><path d="M0.3 2 L2 1 Q3.5 0.4 5 1 Q5.8 2 5 3 Q3.5 3.6 2 3 Z" fill="#3b4566"/></svg>
<div class="a" style="left:157px;top:160px;width:0.6px;height:10px;background:#dde3fa;"></div>
<div class="a" style="left:212.5px;top:160px;width:0.6px;height:10px;background:#dde3fa;"></div>
<div class="a" style="left:267.2px;top:160px;width:0.6px;height:10px;background:#dde3fa;"></div>
<div class="a" style="left:374px;top:160px;width:0.6px;height:10px;background:#dde3fa;"></div>
<div class="a" style="left:436px;top:160px;width:0.6px;height:10px;background:#dde3fa;"></div>
<div class="a" style="left:513px;top:160px;width:0.6px;height:10px;background:#dde3fa;"></div>
<div class="a" style="left:588px;top:160px;width:0.6px;height:10px;background:#dde3fa;"></div>
<div class="a" style="left:661px;top:160px;width:0.6px;height:10px;background:#dde3fa;"></div>
<div class="a" style="left:767px;top:160px;width:0.6px;height:10px;background:#dde3fa;"></div>
<div class="a" style="left:104.5px;top:171.3px;width:682.0px;height:11px;background:#fff;"></div>
<div class="t" style="top:173.54px;font-size:6.16px;color:#333;left:109.40px;transform-origin:0 50%;transform:scaleX(0.8929);">=</div>
<div class="t" style="top:173.54px;font-size:6.16px;color:#333;left:162.00px;transform-origin:0 50%;transform:scaleX(0.8929);">=</div>
<div class="t" style="top:173.94px;font-size:6.16px;color:#333;left:378.80px;transform-origin:0 50%;transform:scaleX(0.8929);">≤</div>
<svg class="a" style="left:213.0px;top:172.8px" width="7" height="7" viewBox="0 0 7 7"><rect x="0.5" y="0.5" width="6" height="6" rx="0.5" fill="#eef0fb" stroke="#a0a8d4" stroke-width="0.7"/><circle cx="3.5" cy="3.5" r="1.2" fill="#3b4270"/></svg>
<svg class="a" style="left:269.5px;top:172.8px" width="7" height="7" viewBox="0 0 7 7"><rect x="0.5" y="0.5" width="6" height="6" rx="0.5" fill="#eef0fb" stroke="#a0a8d4" stroke-width="0.7"/><circle cx="3.5" cy="3.5" r="1.2" fill="#3b4270"/></svg>
<svg class="a" style="left:437.0px;top:172.8px" width="7" height="7" viewBox="0 0 7 7"><rect x="0.5" y="0.5" width="6" height="6" rx="0.5" fill="#eef0fb" stroke="#a0a8d4" stroke-width="0.7"/><circle cx="3.5" cy="3.5" r="1.2" fill="#3b4270"/></svg>
<svg class="a" style="left:514.9px;top:172.8px" width="7" height="7" viewBox="0 0 7 7"><rect x="0.5" y="0.5" width="6" height="6" rx="0.5" fill="#eef0fb" stroke="#a0a8d4" stroke-width="0.7"/><circle cx="3.5" cy="3.5" r="1.2" fill="#3b4270"/></svg>
<svg class="a" style="left:590.2px;top:172.8px" width="7" height="7" viewBox="0 0 7 7"><rect x="0.5" y="0.5" width="6" height="6" rx="0.5" fill="#eef0fb" stroke="#a0a8d4" stroke-width="0.7"/><circle cx="3.5" cy="3.5" r="1.2" fill="#3b4270"/></svg>
<svg class="a" style="left:663.5px;top:172.8px" width="7" height="7" viewBox="0 0 7 7"><rect x="0.5" y="0.5" width="6" height="6" rx="0.5" fill="#eef0fb" stroke="#a0a8d4" stroke-width="0.7"/><circle cx="3.5" cy="3.5" r="1.2" fill="#3b4270"/></svg>
<svg class="a" style="left:769.5px;top:172.8px" width="7" height="7" viewBox="0 0 7 7"><rect x="0.5" y="0.5" width="6" height="6" rx="0.5" fill="#eef0fb" stroke="#a0a8d4" stroke-width="0.7"/><circle cx="3.5" cy="3.5" r="1.2" fill="#3b4270"/></svg>
<div class="a" style="left:104.5px;top:182.3px;width:682.0px;height:160.7px;overflow:hidden">
<div class="a" style="left:0px;top:0.0px;width:682.0px;height:11.15px;background:#fdf1c6;border-top:0.8px solid #d9cc9a;border-bottom:0.8px solid #d9cc9a"></div>
<div class="t" style="top:2.88px;font-size:6.22px;color:#2c2c2c;left:-123.75px;width:300px;text-align:center;transform-origin:50% 50%;transform:scaleX(0.8929);">21/04/2022</div>
<div class="t" style="top:2.88px;font-size:6.22px;color:#2c2c2c;left:-69.75px;width:300px;text-align:center;transform-origin:50% 50%;transform:scaleX(0.8929);">21/04/2022</div>
<div class="t" style="top:2.88px;font-size:6.22px;color:#2c2c2c;left:109.50px;transform-origin:0 50%;transform:scaleX(0.8929);">0000001</div>
<div class="a" style="left:162.7px;top:0;width:106.80000000000001px;height:343px;overflow:hidden">
<div class="t" style="top:2.88px;font-size:6.22px;color:#2c2c2c;left:3.50px;transform-origin:0 50%;transform:scaleX(0.8929);"></div>
</div>
<div class="t" style="top:2.88px;font-size:6.22px;color:#2c2c2c;left:29.50px;width:300px;text-align:right;transform-origin:100% 50%;transform:scaleX(0.8929);">0</div>
<div class="a" style="left:331.5px;top:0;width:77.0px;height:343px;overflow:hidden">
<div class="t" style="top:2.88px;font-size:6.22px;color:#2c2c2c;left:2.00px;transform-origin:0 50%;transform:scaleX(0.8929);"></div>
</div>
<div class="a" style="left:408.5px;top:0;width:75.0px;height:343px;overflow:hidden">
<div class="t" style="top:2.88px;font-size:6.22px;color:#2c2c2c;left:1.50px;transform-origin:0 50%;transform:scaleX(0.8929);"></div>
</div>
<div class="t" style="top:2.88px;font-size:6.22px;color:#2c2c2c;left:487.00px;transform-origin:0 50%;transform:scaleX(0.8929);"></div>
<div class="a" style="left:556.5px;top:0;width:106.0px;height:343px;overflow:hidden">
<div class="t" style="top:2.88px;font-size:6.22px;color:#2c2c2c;left:2.80px;transform-origin:0 50%;transform:scaleX(0.8929);">Xuất hàng cho chi nhánh khác</div>
</div>
<div class="a" style="left:662.5px;top:0;width:19.5px;height:343px;overflow:hidden">
<div class="t" style="top:2.88px;font-size:6.22px;color:#2c2c2c;left:3.40px;transform-origin:0 50%;transform:scaleX(0.8929);"></div>
</div>
<div class="a" style="left:0px;top:21.7px;width:682.0px;height:0.6px;background:#f1f1f1;"></div>
<div class="t" style="top:14.03px;font-size:6.22px;color:#2c2c2c;left:-123.75px;width:300px;text-align:center;transform-origin:50% 50%;transform:scaleX(0.8929);">25/02/2022</div>
<div class="t" style="top:14.03px;font-size:6.22px;color:#2c2c2c;left:-69.75px;width:300px;text-align:center;transform-origin:50% 50%;transform:scaleX(0.8929);">25/02/2022</div>
<div class="t" style="top:14.03px;font-size:6.22px;color:#2c2c2c;left:109.50px;transform-origin:0 50%;transform:scaleX(0.8929);">NK00015</div>
<div class="a" style="left:162.7px;top:0;width:106.80000000000001px;height:343px;overflow:hidden">
<div class="t" style="top:14.03px;font-size:6.22px;color:#2c2c2c;left:3.50px;transform-origin:0 50%;transform:scaleX(0.8929);">Nhập kho thành phẩm</div>
</div>
<div class="t" style="top:14.03px;font-size:6.22px;color:#2c2c2c;left:29.50px;width:300px;text-align:right;transform-origin:100% 50%;transform:scaleX(0.8929);">220.826.400</div>
<div class="a" style="left:331.5px;top:0;width:77.0px;height:343px;overflow:hidden">
<div class="t" style="top:14.03px;font-size:6.22px;color:#2c2c2c;left:2.00px;transform-origin:0 50%;transform:scaleX(0.8929);">Vũ Ngọc Tấn</div>
</div>
<div class="a" style="left:408.5px;top:0;width:75.0px;height:343px;overflow:hidden">
<div class="t" style="top:14.03px;font-size:6.22px;color:#2c2c2c;left:1.50px;transform-origin:0 50%;transform:scaleX(0.8929);">Vũ Ngọc Tấn</div>
</div>
<div class="t" style="top:14.03px;font-size:6.22px;color:#2c2c2c;left:487.00px;transform-origin:0 50%;transform:scaleX(0.8929);"></div>
<div class="a" style="left:556.5px;top:0;width:106.0px;height:343px;overflow:hidden">
<div class="t" style="top:14.03px;font-size:6.22px;color:#2c2c2c;left:2.80px;transform-origin:0 50%;transform:scaleX(0.8929);">Nhập kho thành phẩm sản xuất</div>
</div>
<div class="a" style="left:662.5px;top:0;width:19.5px;height:343px;overflow:hidden">
<div class="t" style="top:14.03px;font-size:6.22px;color:#2c2c2c;left:3.40px;transform-origin:0 50%;transform:scaleX(0.8929);">BTL00015</div>
</div>
<div class="a" style="left:0px;top:32.85px;width:682.0px;height:0.6px;background:#f1f1f1;"></div>
<div class="t" style="top:25.18px;font-size:6.22px;color:#2c2c2c;left:-123.75px;width:300px;text-align:center;transform-origin:50% 50%;transform:scaleX(0.8929);">21/02/2022</div>
<div class="t" style="top:25.18px;font-size:6.22px;color:#2c2c2c;left:-69.75px;width:300px;text-align:center;transform-origin:50% 50%;transform:scaleX(0.8929);">21/02/2022</div>
<div class="t" style="top:25.18px;font-size:6.22px;color:#2c2c2c;left:109.50px;transform-origin:0 50%;transform:scaleX(0.8929);">XK00027</div>
<div class="a" style="left:162.7px;top:0;width:106.80000000000001px;height:343px;overflow:hidden">
<div class="t" style="top:25.18px;font-size:6.22px;color:#2c2c2c;left:3.50px;transform-origin:0 50%;transform:scaleX(0.8929);">Xuất kho bán hàng</div>
</div>
<div class="t" style="top:25.18px;font-size:6.22px;color:#2c2c2c;left:29.50px;width:300px;text-align:right;transform-origin:100% 50%;transform:scaleX(0.8929);">0</div>
<div class="a" style="left:331.5px;top:0;width:77.0px;height:343px;overflow:hidden">
<div class="t" style="top:25.18px;font-size:6.22px;color:#2c2c2c;left:2.00px;transform-origin:0 50%;transform:scaleX(0.8929);"></div>
</div>
<div class="a" style="left:408.5px;top:0;width:75.0px;height:343px;overflow:hidden">
<div class="t" style="top:25.18px;font-size:6.22px;color:#2c2c2c;left:1.50px;transform-origin:0 50%;transform:scaleX(0.8929);">Nguyễn Thanh Duyên</div>
</div>
<div class="t" style="top:25.18px;font-size:6.22px;color:#2c2c2c;left:487.00px;transform-origin:0 50%;transform:scaleX(0.8929);">Đã lập</div>
<div class="a" style="left:556.5px;top:0;width:106.0px;height:343px;overflow:hidden">
<div class="t" style="top:25.18px;font-size:6.22px;color:#2c2c2c;left:2.80px;transform-origin:0 50%;transform:scaleX(0.8929);">Xuất kho bán hàng</div>
</div>
<div class="a" style="left:662.5px;top:0;width:19.5px;height:343px;overflow:hidden">
<div class="t" style="top:25.18px;font-size:6.22px;color:#2c2c2c;left:3.40px;transform-origin:0 50%;transform:scaleX(0.8929);">XK00027</div>
</div>
<div class="a" style="left:0px;top:44.0px;width:682.0px;height:0.6px;background:#f1f1f1;"></div>
<div class="t" style="top:36.33px;font-size:6.22px;color:#2c2c2c;left:-123.75px;width:300px;text-align:center;transform-origin:50% 50%;transform:scaleX(0.8929);">14/02/2022</div>
<div class="t" style="top:36.33px;font-size:6.22px;color:#2c2c2c;left:-69.75px;width:300px;text-align:center;transform-origin:50% 50%;transform:scaleX(0.8929);">14/02/2022</div>
<div class="t" style="top:36.33px;font-size:6.22px;color:#2c2c2c;left:109.50px;transform-origin:0 50%;transform:scaleX(0.8929);">NK00030</div>
<div class="a" style="left:162.7px;top:0;width:106.80000000000001px;height:343px;overflow:hidden">
<div class="t" style="top:36.33px;font-size:6.22px;color:#2c2c2c;left:3.50px;transform-origin:0 50%;transform:scaleX(0.8929);">Mua hàng của công ty Minh Anh</div>
</div>
<div class="t" style="top:36.33px;font-size:6.22px;color:#2c2c2c;left:29.50px;width:300px;text-align:right;transform-origin:100% 50%;transform:scaleX(0.8929);">12.381.773</div>
<div class="a" style="left:331.5px;top:0;width:77.0px;height:343px;overflow:hidden">
<div class="t" style="top:36.33px;font-size:6.22px;color:#2c2c2c;left:2.00px;transform-origin:0 50%;transform:scaleX(0.8929);"></div>
</div>
<div class="a" style="left:408.5px;top:0;width:75.0px;height:343px;overflow:hidden">
<div class="t" style="top:36.33px;font-size:6.22px;color:#2c2c2c;left:1.50px;transform-origin:0 50%;transform:scaleX(0.8929);">Công ty <span style="color:#6a3450">TNHH</span> Minh Anh</div>
</div>
<div class="t" style="top:36.33px;font-size:6.22px;color:#2c2c2c;left:487.00px;transform-origin:0 50%;transform:scaleX(0.8929);"></div>
<div class="a" style="left:556.5px;top:0;width:106.0px;height:343px;overflow:hidden">
<div class="t" style="top:36.33px;font-size:6.22px;color:#2c2c2c;left:2.80px;transform-origin:0 50%;transform:scaleX(0.8929);">Mua hàng trong nước nhập kho chưa thanh toán</div>
</div>
<div class="a" style="left:662.5px;top:0;width:19.5px;height:343px;overflow:hidden">
<div class="t" style="top:36.33px;font-size:6.22px;color:#2c2c2c;left:3.40px;transform-origin:0 50%;transform:scaleX(0.8929);">BTL00030</div>
</div>
<div class="a" style="left:0px;top:55.15px;width:682.0px;height:0.6px;background:#f1f1f1;"></div>
<div class="t" style="top:47.48px;font-size:6.22px;color:#2c2c2c;left:-123.75px;width:300px;text-align:center;transform-origin:50% 50%;transform:scaleX(0.8929);">11/02/2022</div>
<div class="t" style="top:47.48px;font-size:6.22px;color:#2c2c2c;left:-69.75px;width:300px;text-align:center;transform-origin:50% 50%;transform:scaleX(0.8929);">11/02/2022</div>
<div class="t" style="top:47.48px;font-size:6.22px;color:#2c2c2c;left:109.50px;transform-origin:0 50%;transform:scaleX(0.8929);">NK00012</div>
<div class="a" style="left:162.7px;top:0;width:106.80000000000001px;height:343px;overflow:hidden">
<div class="t" style="top:47.48px;font-size:6.22px;color:#2c2c2c;left:3.50px;transform-origin:0 50%;transform:scaleX(0.8929);">Mua hàng của công ty Lan Tân</div>
</div>
<div class="t" style="top:47.48px;font-size:6.22px;color:#2c2c2c;left:29.50px;width:300px;text-align:right;transform-origin:100% 50%;transform:scaleX(0.8929);">80.000.000</div>
<div class="a" style="left:331.5px;top:0;width:77.0px;height:343px;overflow:hidden">
<div class="t" style="top:47.48px;font-size:6.22px;color:#2c2c2c;left:2.00px;transform-origin:0 50%;transform:scaleX(0.8929);"></div>
</div>
<div class="a" style="left:408.5px;top:0;width:75.0px;height:343px;overflow:hidden">
<div class="t" style="top:47.48px;font-size:6.22px;color:#2c2c2c;left:1.50px;transform-origin:0 50%;transform:scaleX(0.8929);">Công ty <span style="color:#6a3450">TNHH</span> Lan Tân</div>
</div>
<div class="t" style="top:47.48px;font-size:6.22px;color:#2c2c2c;left:487.00px;transform-origin:0 50%;transform:scaleX(0.8929);"></div>
<div class="a" style="left:556.5px;top:0;width:106.0px;height:343px;overflow:hidden">
<div class="t" style="top:47.48px;font-size:6.22px;color:#2c2c2c;left:2.80px;transform-origin:0 50%;transform:scaleX(0.8929);">Mua hàng trong nước nhập kho - Tiền mặt</div>
</div>
<div class="a" style="left:662.5px;top:0;width:19.5px;height:343px;overflow:hidden">
<div class="t" style="top:47.48px;font-size:6.22px;color:#2c2c2c;left:3.40px;transform-origin:0 50%;transform:scaleX(0.8929);">NK00012</div>
</div>
<div class="a" style="left:0px;top:66.3px;width:682.0px;height:0.6px;background:#f1f1f1;"></div>
<div class="t" style="top:58.63px;font-size:6.22px;color:#2c2c2c;left:-123.75px;width:300px;text-align:center;transform-origin:50% 50%;transform:scaleX(0.8929);">07/02/2022</div>
<div class="t" style="top:58.63px;font-size:6.22px;color:#2c2c2c;left:-69.75px;width:300px;text-align:center;transform-origin:50% 50%;transform:scaleX(0.8929);">07/02/2022</div>
<div class="t" style="top:58.63px;font-size:6.22px;color:#2c2c2c;left:109.50px;transform-origin:0 50%;transform:scaleX(0.8929);">NK00029</div>
<div class="a" style="left:162.7px;top:0;width:106.80000000000001px;height:343px;overflow:hidden">
<div class="t" style="top:58.63px;font-size:6.22px;color:#2c2c2c;left:3.50px;transform-origin:0 50%;transform:scaleX(0.8929);">Nhập kho 02 điện thoại <span style="color:#3b5fb0">lỗi</span> phần cứng</div>
</div>
<div class="t" style="top:58.63px;font-size:6.22px;color:#2c2c2c;left:29.50px;width:300px;text-align:right;transform-origin:100% 50%;transform:scaleX(0.8929);">12.298.140</div>
<div class="a" style="left:331.5px;top:0;width:77.0px;height:343px;overflow:hidden">
<div class="t" style="top:58.63px;font-size:6.22px;color:#2c2c2c;left:2.00px;transform-origin:0 50%;transform:scaleX(0.8929);"></div>
</div>
<div class="a" style="left:408.5px;top:0;width:75.0px;height:343px;overflow:hidden">
<div class="t" style="top:58.63px;font-size:6.22px;color:#2c2c2c;left:1.50px;transform-origin:0 50%;transform:scaleX(0.8929);">Công ty <span style="color:#6a3450">TNHH</span> Phú Thái</div>
</div>
<div class="t" style="top:58.63px;font-size:6.22px;color:#2c2c2c;left:487.00px;transform-origin:0 50%;transform:scaleX(0.8929);"></div>
<div class="a" style="left:556.5px;top:0;width:106.0px;height:343px;overflow:hidden">
<div class="t" style="top:58.63px;font-size:6.22px;color:#2c2c2c;left:2.80px;transform-origin:0 50%;transform:scaleX(0.8929);">Nhập kho từ hàng bán trả lại</div>
</div>
<div class="a" style="left:662.5px;top:0;width:19.5px;height:343px;overflow:hidden">
<div class="t" style="top:58.63px;font-size:6.22px;color:#2c2c2c;left:3.40px;transform-origin:0 50%;transform:scaleX(0.8929);">BTL00029</div>
</div>
<div class="a" style="left:0px;top:77.45px;width:682.0px;height:0.6px;background:#f1f1f1;"></div>
<div class="t" style="top:69.78px;font-size:6.22px;color:#2c2c2c;left:-123.75px;width:300px;text-align:center;transform-origin:50% 50%;transform:scaleX(0.8929);">05/02/2022</div>
<div class="t" style="top:69.78px;font-size:6.22px;color:#2c2c2c;left:-69.75px;width:300px;text-align:center;transform-origin:50% 50%;transform:scaleX(0.8929);">05/02/2022</div>
<div class="t" style="top:69.78px;font-size:6.22px;color:#2c2c2c;left:109.50px;transform-origin:0 50%;transform:scaleX(0.8929);">XK00033</div>
<div class="a" style="left:162.7px;top:0;width:106.80000000000001px;height:343px;overflow:hidden">
<div class="t" style="top:69.78px;font-size:6.22px;color:#2c2c2c;left:3.50px;transform-origin:0 50%;transform:scaleX(0.8929);">Xuất kho bán hàng</div>
</div>
<div class="t" style="top:69.78px;font-size:6.22px;color:#2c2c2c;left:29.50px;width:300px;text-align:right;transform-origin:100% 50%;transform:scaleX(0.8929);">61.490.700</div>
<div class="a" style="left:331.5px;top:0;width:77.0px;height:343px;overflow:hidden">
<div class="t" style="top:69.78px;font-size:6.22px;color:#2c2c2c;left:2.00px;transform-origin:0 50%;transform:scaleX(0.8929);"></div>
</div>
<div class="a" style="left:408.5px;top:0;width:75.0px;height:343px;overflow:hidden">
<div class="t" style="top:69.78px;font-size:6.22px;color:#2c2c2c;left:1.50px;transform-origin:0 50%;transform:scaleX(0.8929);">Công ty <span style="color:#6a3450">TNHH</span> Phú Thái</div>
</div>
<div class="t" style="top:69.78px;font-size:6.22px;color:#2c2c2c;left:487.00px;transform-origin:0 50%;transform:scaleX(0.8929);">Đã lập</div>
<div class="a" style="left:556.5px;top:0;width:106.0px;height:343px;overflow:hidden">
<div class="t" style="top:69.78px;font-size:6.22px;color:#2c2c2c;left:2.80px;transform-origin:0 50%;transform:scaleX(0.8929);">Xuất kho bán hàng</div>
</div>
<div class="a" style="left:662.5px;top:0;width:19.5px;height:343px;overflow:hidden">
<div class="t" style="top:69.78px;font-size:6.22px;color:#2c2c2c;left:3.40px;transform-origin:0 50%;transform:scaleX(0.8929);">XK00033</div>
</div>
<div class="a" style="left:0px;top:88.6px;width:682.0px;height:0.6px;background:#f1f1f1;"></div>
<div class="t" style="top:80.93px;font-size:6.22px;color:#2c2c2c;left:-123.75px;width:300px;text-align:center;transform-origin:50% 50%;transform:scaleX(0.8929);">05/02/2022</div>
<div class="t" style="top:80.93px;font-size:6.22px;color:#2c2c2c;left:-69.75px;width:300px;text-align:center;transform-origin:50% 50%;transform:scaleX(0.8929);">05/02/2022</div>
<div class="t" style="top:80.93px;font-size:6.22px;color:#2c2c2c;left:109.50px;transform-origin:0 50%;transform:scaleX(0.8929);">NK00023</div>
<div class="a" style="left:162.7px;top:0;width:106.80000000000001px;height:343px;overflow:hidden">
<div class="t" style="top:80.93px;font-size:6.22px;color:#2c2c2c;left:3.50px;transform-origin:0 50%;transform:scaleX(0.8929);"></div>
</div>
<div class="t" style="top:80.93px;font-size:6.22px;color:#2c2c2c;left:29.50px;width:300px;text-align:right;transform-origin:100% 50%;transform:scaleX(0.8929);">0</div>
<div class="a" style="left:331.5px;top:0;width:77.0px;height:343px;overflow:hidden">
<div class="t" style="top:80.93px;font-size:6.22px;color:#2c2c2c;left:2.00px;transform-origin:0 50%;transform:scaleX(0.8929);"></div>
</div>
<div class="a" style="left:408.5px;top:0;width:75.0px;height:343px;overflow:hidden">
<div class="t" style="top:80.93px;font-size:6.22px;color:#2c2c2c;left:1.50px;transform-origin:0 50%;transform:scaleX(0.8929);">Công ty <span style="color:#6a3450">TNHH</span> Phú Thái</div>
</div>
<div class="t" style="top:80.93px;font-size:6.22px;color:#2c2c2c;left:487.00px;transform-origin:0 50%;transform:scaleX(0.8929);"></div>
<div class="a" style="left:556.5px;top:0;width:106.0px;height:343px;overflow:hidden">
<div class="t" style="top:80.93px;font-size:6.22px;color:#2c2c2c;left:2.80px;transform-origin:0 50%;transform:scaleX(0.8929);">Nhập kho từ hàng bán trả lại</div>
</div>
<div class="a" style="left:662.5px;top:0;width:19.5px;height:343px;overflow:hidden">
<div class="t" style="top:80.93px;font-size:6.22px;color:#2c2c2c;left:3.40px;transform-origin:0 50%;transform:scaleX(0.8929);">BTL00023</div>
</div>
<div class="a" style="left:0px;top:99.75px;width:682.0px;height:0.6px;background:#f1f1f1;"></div>
<div class="t" style="top:92.08px;font-size:6.22px;color:#2c2c2c;left:-123.75px;width:300px;text-align:center;transform-origin:50% 50%;transform:scaleX(0.8929);">04/02/2022</div>
<div class="t" style="top:92.08px;font-size:6.22px;color:#2c2c2c;left:-69.75px;width:300px;text-align:center;transform-origin:50% 50%;transform:scaleX(0.8929);">04/02/2022</div>
<div class="t" style="top:92.08px;font-size:6.22px;color:#2c2c2c;left:109.50px;transform-origin:0 50%;transform:scaleX(0.8929);">XK00032</div>
<div class="a" style="left:162.7px;top:0;width:106.80000000000001px;height:343px;overflow:hidden">
<div class="t" style="top:92.08px;font-size:6.22px;color:#2c2c2c;left:3.50px;transform-origin:0 50%;transform:scaleX(0.8929);">Xuất kho bán hàng</div>
</div>
<div class="t" style="top:92.08px;font-size:6.22px;color:#2c2c2c;left:29.50px;width:300px;text-align:right;transform-origin:100% 50%;transform:scaleX(0.8929);">0</div>
<div class="a" style="left:331.5px;top:0;width:77.0px;height:343px;overflow:hidden">
<div class="t" style="top:92.08px;font-size:6.22px;color:#2c2c2c;left:2.00px;transform-origin:0 50%;transform:scaleX(0.8929);"></div>
</div>
<div class="a" style="left:408.5px;top:0;width:75.0px;height:343px;overflow:hidden">
<div class="t" style="top:92.08px;font-size:6.22px;color:#2c2c2c;left:1.50px;transform-origin:0 50%;transform:scaleX(0.8929);">Công ty <span style="color:#6a3450">TNHH</span> Phú Thái</div>
</div>
<div class="t" style="top:92.08px;font-size:6.22px;color:#2c2c2c;left:487.00px;transform-origin:0 50%;transform:scaleX(0.8929);">Đã lập</div>
<div class="a" style="left:556.5px;top:0;width:106.0px;height:343px;overflow:hidden">
<div class="t" style="top:92.08px;font-size:6.22px;color:#2c2c2c;left:2.80px;transform-origin:0 50%;transform:scaleX(0.8929);">Xuất kho bán hàng</div>
</div>
<div class="a" style="left:662.5px;top:0;width:19.5px;height:343px;overflow:hidden">
<div class="t" style="top:92.08px;font-size:6.22px;color:#2c2c2c;left:3.40px;transform-origin:0 50%;transform:scaleX(0.8929);">XK00032</div>
</div>
<div class="a" style="left:0px;top:110.9px;width:682.0px;height:0.6px;background:#f1f1f1;"></div>
<div class="t" style="top:103.23px;font-size:6.22px;color:#2c2c2c;left:-123.75px;width:300px;text-align:center;transform-origin:50% 50%;transform:scaleX(0.8929);">04/02/2022</div>
<div class="t" style="top:103.23px;font-size:6.22px;color:#2c2c2c;left:-69.75px;width:300px;text-align:center;transform-origin:50% 50%;transform:scaleX(0.8929);">04/02/2022</div>
<div class="t" style="top:103.23px;font-size:6.22px;color:#2c2c2c;left:109.50px;transform-origin:0 50%;transform:scaleX(0.8929);">XK00031</div>
<div class="a" style="left:162.7px;top:0;width:106.80000000000001px;height:343px;overflow:hidden">
<div class="t" style="top:103.23px;font-size:6.22px;color:#2c2c2c;left:3.50px;transform-origin:0 50%;transform:scaleX(0.8929);">Xuất kho bán hàng</div>
</div>
<div class="t" style="top:103.23px;font-size:6.22px;color:#2c2c2c;left:29.50px;width:300px;text-align:right;transform-origin:100% 50%;transform:scaleX(0.8929);">13.181.233</div>
<div class="a" style="left:331.5px;top:0;width:77.0px;height:343px;overflow:hidden">
<div class="t" style="top:103.23px;font-size:6.22px;color:#2c2c2c;left:2.00px;transform-origin:0 50%;transform:scaleX(0.8929);"></div>
</div>
<div class="a" style="left:408.5px;top:0;width:75.0px;height:343px;overflow:hidden">
<div class="t" style="top:103.23px;font-size:6.22px;color:#2c2c2c;left:1.50px;transform-origin:0 50%;transform:scaleX(0.8929);">Công ty <span style="color:#6a3450">TNHH</span> Tiến Anh</div>
</div>
<div class="t" style="top:103.23px;font-size:6.22px;color:#2c2c2c;left:487.00px;transform-origin:0 50%;transform:scaleX(0.8929);">Đã lập</div>
<div class="a" style="left:556.5px;top:0;width:106.0px;height:343px;overflow:hidden">
<div class="t" style="top:103.23px;font-size:6.22px;color:#2c2c2c;left:2.80px;transform-origin:0 50%;transform:scaleX(0.8929);">Xuất kho bán hàng</div>
</div>
<div class="a" style="left:662.5px;top:0;width:19.5px;height:343px;overflow:hidden">
<div class="t" style="top:103.23px;font-size:6.22px;color:#2c2c2c;left:3.40px;transform-origin:0 50%;transform:scaleX(0.8929);">XK00031</div>
</div>
<div class="a" style="left:0px;top:122.05px;width:682.0px;height:0.6px;background:#f1f1f1;"></div>
<div class="t" style="top:114.38px;font-size:6.22px;color:#2c2c2c;left:-123.75px;width:300px;text-align:center;transform-origin:50% 50%;transform:scaleX(0.8929);">31/01/2022</div>
<div class="t" style="top:114.38px;font-size:6.22px;color:#2c2c2c;left:-69.75px;width:300px;text-align:center;transform-origin:50% 50%;transform:scaleX(0.8929);">31/01/2022</div>
<div class="t" style="top:114.38px;font-size:6.22px;color:#2c2c2c;left:109.50px;transform-origin:0 50%;transform:scaleX(0.8929);">XK00024</div>
<div class="a" style="left:162.7px;top:0;width:106.80000000000001px;height:343px;overflow:hidden">
<div class="t" style="top:114.38px;font-size:6.22px;color:#2c2c2c;left:3.50px;transform-origin:0 50%;transform:scaleX(0.8929);">Xuất kho bán hàng</div>
</div>
<div class="t" style="top:114.38px;font-size:6.22px;color:#2c2c2c;left:29.50px;width:300px;text-align:right;transform-origin:100% 50%;transform:scaleX(0.8929);">42.374.020</div>
<div class="a" style="left:331.5px;top:0;width:77.0px;height:343px;overflow:hidden">
<div class="t" style="top:114.38px;font-size:6.22px;color:#2c2c2c;left:2.00px;transform-origin:0 50%;transform:scaleX(0.8929);"></div>
</div>
<div class="a" style="left:408.5px;top:0;width:75.0px;height:343px;overflow:hidden">
<div class="t" style="top:114.38px;font-size:6.22px;color:#2c2c2c;left:1.50px;transform-origin:0 50%;transform:scaleX(0.8929);">Công ty <span style="color:#6a3450">TNHH</span> Tiến Anh</div>
</div>
<div class="t" style="top:114.38px;font-size:6.22px;color:#2c2c2c;left:487.00px;transform-origin:0 50%;transform:scaleX(0.8929);">Đã lập</div>
<div class="a" style="left:556.5px;top:0;width:106.0px;height:343px;overflow:hidden">
<div class="t" style="top:114.38px;font-size:6.22px;color:#2c2c2c;left:2.80px;transform-origin:0 50%;transform:scaleX(0.8929);">Xuất kho bán hàng</div>
</div>
<div class="a" style="left:662.5px;top:0;width:19.5px;height:343px;overflow:hidden">
<div class="t" style="top:114.38px;font-size:6.22px;color:#2c2c2c;left:3.40px;transform-origin:0 50%;transform:scaleX(0.8929);">XK00024</div>
</div>
<div class="a" style="left:0px;top:133.2px;width:682.0px;height:0.6px;background:#f1f1f1;"></div>
<div class="t" style="top:125.53px;font-size:6.22px;color:#2c2c2c;left:-123.75px;width:300px;text-align:center;transform-origin:50% 50%;transform:scaleX(0.8929);">31/01/2022</div>
<div class="t" style="top:125.53px;font-size:6.22px;color:#2c2c2c;left:-69.75px;width:300px;text-align:center;transform-origin:50% 50%;transform:scaleX(0.8929);">31/01/2022</div>
<div class="t" style="top:125.53px;font-size:6.22px;color:#2c2c2c;left:109.50px;transform-origin:0 50%;transform:scaleX(0.8929);">XK00021</div>
<div class="a" style="left:162.7px;top:0;width:106.80000000000001px;height:343px;overflow:hidden">
<div class="t" style="top:125.53px;font-size:6.22px;color:#2c2c2c;left:3.50px;transform-origin:0 50%;transform:scaleX(0.8929);">Xuất kho bán hàng</div>
</div>
<div class="t" style="top:125.53px;font-size:6.22px;color:#2c2c2c;left:29.50px;width:300px;text-align:right;transform-origin:100% 50%;transform:scaleX(0.8929);">2.590.300</div>
<div class="a" style="left:331.5px;top:0;width:77.0px;height:343px;overflow:hidden">
<div class="t" style="top:125.53px;font-size:6.22px;color:#2c2c2c;left:2.00px;transform-origin:0 50%;transform:scaleX(0.8929);"></div>
</div>
<div class="a" style="left:408.5px;top:0;width:75.0px;height:343px;overflow:hidden">
<div class="t" style="top:125.53px;font-size:6.22px;color:#2c2c2c;left:1.50px;transform-origin:0 50%;transform:scaleX(0.8929);">Công ty <span style="color:#6a3450">TNHH</span> Phú Thái</div>
</div>
<div class="t" style="top:125.53px;font-size:6.22px;color:#2c2c2c;left:487.00px;transform-origin:0 50%;transform:scaleX(0.8929);">Đã lập</div>
<div class="a" style="left:556.5px;top:0;width:106.0px;height:343px;overflow:hidden">
<div class="t" style="top:125.53px;font-size:6.22px;color:#2c2c2c;left:2.80px;transform-origin:0 50%;transform:scaleX(0.8929);">Xuất kho bán hàng</div>
</div>
<div class="a" style="left:662.5px;top:0;width:19.5px;height:343px;overflow:hidden">
<div class="t" style="top:125.53px;font-size:6.22px;color:#2c2c2c;left:3.40px;transform-origin:0 50%;transform:scaleX(0.8929);">XK00021</div>
</div>
<div class="a" style="left:0px;top:144.35px;width:682.0px;height:0.6px;background:#f1f1f1;"></div>
<div class="t" style="top:136.68px;font-size:6.22px;color:#2c2c2c;left:-123.75px;width:300px;text-align:center;transform-origin:50% 50%;transform:scaleX(0.8929);">31/01/2022</div>
<div class="t" style="top:136.68px;font-size:6.22px;color:#2c2c2c;left:-69.75px;width:300px;text-align:center;transform-origin:50% 50%;transform:scaleX(0.8929);">31/01/2022</div>
<div class="t" style="top:136.68px;font-size:6.22px;color:#2c2c2c;left:109.50px;transform-origin:0 50%;transform:scaleX(0.8929);">XK00020</div>
<div class="a" style="left:162.7px;top:0;width:106.80000000000001px;height:343px;overflow:hidden">
<div class="t" style="top:136.68px;font-size:6.22px;color:#2c2c2c;left:3.50px;transform-origin:0 50%;transform:scaleX(0.8929);">Xuất kho bán hàng</div>
</div>
<div class="t" style="top:136.68px;font-size:6.22px;color:#2c2c2c;left:29.50px;width:300px;text-align:right;transform-origin:100% 50%;transform:scaleX(0.8929);">10.000.000</div>
<div class="a" style="left:331.5px;top:0;width:77.0px;height:343px;overflow:hidden">
<div class="t" style="top:136.68px;font-size:6.22px;color:#2c2c2c;left:2.00px;transform-origin:0 50%;transform:scaleX(0.8929);"></div>
</div>
<div class="a" style="left:408.5px;top:0;width:75.0px;height:343px;overflow:hidden">
<div class="t" style="top:136.68px;font-size:6.22px;color:#2c2c2c;left:1.50px;transform-origin:0 50%;transform:scaleX(0.8929);">Công ty <span style="color:#6a3450">TNHH</span> Tiến Đạt</div>
</div>
<div class="t" style="top:136.68px;font-size:6.22px;color:#2c2c2c;left:487.00px;transform-origin:0 50%;transform:scaleX(0.8929);">Đã lập</div>
<div class="a" style="left:556.5px;top:0;width:106.0px;height:343px;overflow:hidden">
<div class="t" style="top:136.68px;font-size:6.22px;color:#2c2c2c;left:2.80px;transform-origin:0 50%;transform:scaleX(0.8929);">Xuất kho bán hàng</div>
</div>
<div class="a" style="left:662.5px;top:0;width:19.5px;height:343px;overflow:hidden">
<div class="t" style="top:136.68px;font-size:6.22px;color:#2c2c2c;left:3.40px;transform-origin:0 50%;transform:scaleX(0.8929);">XK00020</div>
</div>
<div class="a" style="left:0px;top:155.5px;width:682.0px;height:0.6px;background:#f1f1f1;"></div>
<div class="t" style="top:147.83px;font-size:6.22px;color:#2c2c2c;left:-123.75px;width:300px;text-align:center;transform-origin:50% 50%;transform:scaleX(0.8929);">31/01/2022</div>
<div class="t" style="top:147.83px;font-size:6.22px;color:#2c2c2c;left:-69.75px;width:300px;text-align:center;transform-origin:50% 50%;transform:scaleX(0.8929);">31/01/2022</div>
<div class="t" style="top:147.83px;font-size:6.22px;color:#2c2c2c;left:109.50px;transform-origin:0 50%;transform:scaleX(0.8929);">XK00019</div>
<div class="a" style="left:162.7px;top:0;width:106.80000000000001px;height:343px;overflow:hidden">
<div class="t" style="top:147.83px;font-size:6.22px;color:#2c2c2c;left:3.50px;transform-origin:0 50%;transform:scaleX(0.8929);">Xuất kho bán hàng</div>
</div>
<div class="t" style="top:147.83px;font-size:6.22px;color:#2c2c2c;left:29.50px;width:300px;text-align:right;transform-origin:100% 50%;transform:scaleX(0.8929);">41.074.750</div>
<div class="a" style="left:331.5px;top:0;width:77.0px;height:343px;overflow:hidden">
<div class="t" style="top:147.83px;font-size:6.22px;color:#2c2c2c;left:2.00px;transform-origin:0 50%;transform:scaleX(0.8929);"></div>
</div>
<div class="a" style="left:408.5px;top:0;width:75.0px;height:343px;overflow:hidden">
<div class="t" style="top:147.83px;font-size:6.22px;color:#2c2c2c;left:1.50px;transform-origin:0 50%;transform:scaleX(0.8929);">Công ty Cổ phần Hoàng Gia</div>
</div>
<div class="t" style="top:147.83px;font-size:6.22px;color:#2c2c2c;left:487.00px;transform-origin:0 50%;transform:scaleX(0.8929);">Đã lập</div>
<div class="a" style="left:556.5px;top:0;width:106.0px;height:343px;overflow:hidden">
<div class="t" style="top:147.83px;font-size:6.22px;color:#2c2c2c;left:2.80px;transform-origin:0 50%;transform:scaleX(0.8929);">Xuất kho bán hàng</div>
</div>
<div class="a" style="left:662.5px;top:0;width:19.5px;height:343px;overflow:hidden">
<div class="t" style="top:147.83px;font-size:6.22px;color:#2c2c2c;left:3.40px;transform-origin:0 50%;transform:scaleX(0.8929);">XK00019</div>
</div>
<div class="a" style="left:0px;top:166.65px;width:682.0px;height:0.6px;background:#f1f1f1;"></div>
<div class="t" style="top:158.98px;font-size:6.22px;color:#2c2c2c;left:-123.75px;width:300px;text-align:center;transform-origin:50% 50%;transform:scaleX(0.8929);">31/01/2022</div>
<div class="t" style="top:158.98px;font-size:6.22px;color:#2c2c2c;left:-69.75px;width:300px;text-align:center;transform-origin:50% 50%;transform:scaleX(0.8929);">31/01/2022</div>
<div class="t" style="top:158.98px;font-size:6.22px;color:#2c2c2c;left:109.50px;transform-origin:0 50%;transform:scaleX(0.8929);">XK00018</div>
<div class="a" style="left:162.7px;top:0;width:106.80000000000001px;height:343px;overflow:hidden">
<div class="t" style="top:158.98px;font-size:6.22px;color:#2c2c2c;left:3.50px;transform-origin:0 50%;transform:scaleX(0.8929);">Xuất kho bán hàng</div>
</div>
<div class="t" style="top:158.98px;font-size:6.22px;color:#2c2c2c;left:29.50px;width:300px;text-align:right;transform-origin:100% 50%;transform:scaleX(0.8929);">5.612.000</div>
<div class="a" style="left:331.5px;top:0;width:77.0px;height:343px;overflow:hidden">
<div class="t" style="top:158.98px;font-size:6.22px;color:#2c2c2c;left:2.00px;transform-origin:0 50%;transform:scaleX(0.8929);">Hoàng Thị Bích</div>
</div>
<div class="a" style="left:408.5px;top:0;width:75.0px;height:343px;overflow:hidden">
<div class="t" style="top:158.98px;font-size:6.22px;color:#2c2c2c;left:1.50px;transform-origin:0 50%;transform:scaleX(0.8929);">Công ty <span style="color:#6a3450">TNHH</span> Bảo Anh</div>
</div>
<div class="t" style="top:158.98px;font-size:6.22px;color:#2c2c2c;left:487.00px;transform-origin:0 50%;transform:scaleX(0.8929);">Đã lập</div>
<div class="a" style="left:556.5px;top:0;width:106.0px;height:343px;overflow:hidden">
<div class="t" style="top:158.98px;font-size:6.22px;color:#2c2c2c;left:2.80px;transform-origin:0 50%;transform:scaleX(0.8929);">Xuất kho bán hàng</div>
</div>
<div class="a" style="left:662.5px;top:0;width:19.5px;height:343px;overflow:hidden">
<div class="t" style="top:158.98px;font-size:6.22px;color:#2c2c2c;left:3.40px;transform-origin:0 50%;transform:scaleX(0.8929);">XK00018</div>
</div>
<div class="a" style="left:52.5px;top:11.15px;width:0.7px;height:200px;background:#f5f5f5;"></div>
<div class="a" style="left:108.0px;top:11.15px;width:0.7px;height:200px;background:#f5f5f5;"></div>
<div class="a" style="left:162.7px;top:0px;width:0.7px;height:200px;background:#c9c9c9;"></div>
<div class="a" style="left:269.5px;top:11.15px;width:0.7px;height:200px;background:#f5f5f5;"></div>
<div class="a" style="left:331.5px;top:11.15px;width:0.7px;height:200px;background:#f5f5f5;"></div>
<div class="a" style="left:408.5px;top:11.15px;width:0.7px;height:200px;background:#f5f5f5;"></div>
<div class="a" style="left:483.5px;top:11.15px;width:0.7px;height:200px;background:#f5f5f5;"></div>
<div class="a" style="left:556.5px;top:11.15px;width:0.7px;height:200px;background:#f5f5f5;"></div>
<div class="a" style="left:662.5px;top:11.15px;width:0.7px;height:200px;background:#f5f5f5;"></div>
</div>
<div class="a" style="left:267.2px;top:170.5px;width:0.7px;height:12px;background:#c9c9c9;"></div>
<div class="a" style="left:104.5px;top:343px;width:682.0px;height:10.5px;background:#ebebeb;"></div>
<div class="a" style="left:267.2px;top:343px;width:0.7px;height:10.5px;background:#c9c9c9;"></div>
<div class="t" style="top:345.97px;font-size:6.09px;color:#3a3a3a;left:106.90px;transform-origin:0 50%;transform:scaleX(0.8929);">Số dòng = 69</div>
<div class="t" style="top:345.91px;font-size:6.22px;color:#3a3a3a;left:134.00px;width:300px;text-align:right;transform-origin:100% 50%;transform:scaleX(0.8929);">5.369.561.876</div>
<div class="a" style="left:104.5px;top:353px;width:682.0px;height:10px;background:#ebebeb;"></div>
<div class="a" style="left:104.5px;top:353px;width:535.5px;height:1.5px;background:#eef0f8;"></div>
<div class="a" style="left:104.5px;top:354.5px;width:530.0px;height:8.6px;background:#c3ccf5;"></div>
<div class="a" style="left:104.5px;top:363px;width:682.0px;height:0.7px;background:#cdd3ec;"></div>
<svg class="a" style="left:107px;top:357px" width="4" height="4" viewBox="0 0 4 4"><path d="M3.2 0.3 L0.6 2 L3.2 3.7Z" fill="#333"/></svg>
<div class="a" style="left:778.2px;top:353px;width:8px;height:10.3px;background:#e3e7f8;"></div>
<svg class="a" style="left:780.5px;top:356.5px" width="4" height="4" viewBox="0 0 4 4"><path d="M0.6 0.3 L3.2 2 L0.6 3.7Z" fill="#333"/></svg>
<div class="a" style="left:437.6px;top:363.5px;width:26.3px;height:4px;background:#e9ecf9;border:0.6px solid #9ea6cc"></div>
<svg class="a" style="left:448.8px;top:364.6px" width="4" height="2" viewBox="0 0 4 2"><path d="M0 0 H3.4 L1.7 1.8Z" fill="#333"/></svg>
<div class="a" style="left:105.7px;top:368px;width:28.9px;height:9.3px;background:linear-gradient(#fbdb8f,#f6cd72);border-radius:1px 1px 0 0"></div>
<div class="t" style="top:369.81px;font-size:6.22px;color:#1d1d1d;font-weight:bold;left:-29.90px;width:300px;text-align:center;transform-origin:50% 50%;transform:scaleX(0.8929);">Chi tiết</div>
<div class="a" style="left:104.5px;top:377.2px;width:682.0px;height:89px;background:#fff;"></div>
<div class="a" style="left:104.5px;top:377.2px;width:682.0px;height:11.1px;background:#c5cef4;"></div>
<div class="t" style="top:380.04px;font-size:6.16px;color:#333;left:115.60px;transform-origin:0 50%;transform:scaleX(0.8929);">Mã hàng</div>
<div class="t" style="top:380.04px;font-size:6.16px;color:#333;left:194.60px;transform-origin:0 50%;transform:scaleX(0.8929);">Tên hàng</div>
<div class="t" style="top:380.04px;font-size:6.16px;color:#333;left:281.70px;transform-origin:0 50%;transform:scaleX(0.8929);">Kho</div>
<div class="t" style="top:380.04px;font-size:6.16px;color:#333;left:329.00px;transform-origin:0 50%;transform:scaleX(0.8929);">TK Nợ</div>
<div class="t" style="top:380.04px;font-size:6.16px;color:#333;left:377.80px;transform-origin:0 50%;transform:scaleX(0.8929);">TK Có</div>
<div class="t" style="top:380.04px;font-size:6.16px;color:#333;left:432.00px;transform-origin:0 50%;transform:scaleX(0.8929);">Mã quy cách</div>
<div class="t" style="top:380.04px;font-size:6.16px;color:#333;left:505.00px;transform-origin:0 50%;transform:scaleX(0.8929);">ĐVT</div>
<div class="t" style="top:380.04px;font-size:6.16px;color:#333;left:552.00px;transform-origin:0 50%;transform:scaleX(0.8929);">Số lượng</div>
<div class="t" style="top:380.04px;font-size:6.16px;color:#333;left:606.50px;transform-origin:0 50%;transform:scaleX(0.8929);">Đơn giá bán</div>
<div class="t" style="top:380.04px;font-size:6.16px;color:#333;left:669.60px;transform-origin:0 50%;transform:scaleX(0.8929);">Thành tiền</div>
<div class="t" style="top:380.04px;font-size:6.16px;color:#333;left:728.00px;transform-origin:0 50%;transform:scaleX(0.8929);">Đơn giá vốn</div>
<svg class="a" style="left:149.7px;top:380.3px" width="4" height="6" viewBox="0 0 4 6"><ellipse cx="2" cy="2.6" rx="1.4" ry="2" fill="#3b4566"/><path d="M2 4 V5.6" stroke="#3b4566" stroke-width="0.6"/></svg>
<svg class="a" style="left:256px;top:381.3px" width="6" height="4" viewBox="0 0 6 4"><path d="M0.3 2 L2 1 Q3.5 0.4 5 1 Q5.8 2 5 3 Q3.5 3.6 2 3 Z" fill="#3b4566"/></svg>
<svg class="a" style="left:310.2px;top:381.3px" width="6" height="4" viewBox="0 0 6 4"><path d="M0.3 2 L2 1 Q3.5 0.4 5 1 Q5.8 2 5 3 Q3.5 3.6 2 3 Z" fill="#3b4566"/></svg>
<svg class="a" style="left:357.6px;top:381.3px" width="6" height="4" viewBox="0 0 6 4"><path d="M0.3 2 L2 1 Q3.5 0.4 5 1 Q5.8 2 5 3 Q3.5 3.6 2 3 Z" fill="#3b4566"/></svg>
<svg class="a" style="left:406.3px;top:381.3px" width="6" height="4" viewBox="0 0 6 4"><path d="M0.3 2 L2 1 Q3.5 0.4 5 1 Q5.8 2 5 3 Q3.5 3.6 2 3 Z" fill="#3b4566"/></svg>
<svg class="a" style="left:482.6px;top:381.3px" width="6" height="4" viewBox="0 0 6 4"><path d="M0.3 2 L2 1 Q3.5 0.4 5 1 Q5.8 2 5 3 Q3.5 3.6 2 3 Z" fill="#3b4566"/></svg>
<svg class="a" style="left:531.3px;top:381.3px" width="6" height="4" viewBox="0 0 6 4"><path d="M0.3 2 L2 1 Q3.5 0.4 5 1 Q5.8 2 5 3 Q3.5 3.6 2 3 Z" fill="#3b4566"/></svg>
<svg class="a" style="left:588.5px;top:381.3px" width="6" height="4" viewBox="0 0 6 4"><path d="M0.3 2 L2 1 Q3.5 0.4 5 1 Q5.8 2 5 3 Q3.5 3.6 2 3 Z" fill="#3b4566"/></svg>
<svg class="a" style="left:649.5px;top:381.3px" width="6" height="4" viewBox="0 0 6 4"><path d="M0.3 2 L2 1 Q3.5 0.4 5 1 Q5.8 2 5 3 Q3.5 3.6 2 3 Z" fill="#3b4566"/></svg>
<svg class="a" style="left:710.7px;top:381.3px" width="6" height="4" viewBox="0 0 6 4"><path d="M0.3 2 L2 1 Q3.5 0.4 5 1 Q5.8 2 5 3 Q3.5 3.6 2 3 Z" fill="#3b4566"/></svg>
<svg class="a" style="left:771.7px;top:381.3px" width="6" height="4" viewBox="0 0 6 4"><path d="M0.3 2 L2 1 Q3.5 0.4 5 1 Q5.8 2 5 3 Q3.5 3.6 2 3 Z" fill="#3b4566"/></svg>
<div class="a" style="left:104.5px;top:399.0px;width:682.0px;height:0.6px;background:#f1f1f1;"></div>
<div class="a" style="left:104.5px;top:410.0px;width:682.0px;height:0.6px;background:#f1f1f1;"></div>
<div class="a" style="left:104.5px;top:421.0px;width:682.0px;height:0.6px;background:#f1f1f1;"></div>
<div class="a" style="left:104.5px;top:432.0px;width:682.0px;height:0.6px;background:#f1f1f1;"></div>
<div class="a" style="left:104.5px;top:443.0px;width:682.0px;height:0.6px;background:#f1f1f1;"></div>
<div class="a" style="left:104.5px;top:454.0px;width:682.0px;height:0.6px;background:#f1f1f1;"></div>
<div class="a" style="left:104.5px;top:465.0px;width:682.0px;height:0.6px;background:#f1f1f1;"></div>
<div class="a" style="left:413.3px;top:388.5px;width:75.7px;height:77.5px;background:#efefef;"></div>
<div class="a" style="left:717.3px;top:388.5px;width:69.2px;height:77.5px;background:#efefef;"></div>
<div class="a" style="left:154.8px;top:388.5px;width:0.7px;height:89.5px;background:#c8c8c8;"></div>
<div class="a" style="left:154.8px;top:377.5px;width:0.7px;height:10.8px;background:#e4e8fb;"></div>
<div class="a" style="left:263.7px;top:388.5px;width:0.7px;height:89.5px;background:#ececec;"></div>
<div class="a" style="left:263.7px;top:377.5px;width:0.7px;height:10.8px;background:#e4e8fb;"></div>
<div class="a" style="left:316.8px;top:388.5px;width:0.7px;height:89.5px;background:#ececec;"></div>
<div class="a" style="left:316.8px;top:377.5px;width:0.7px;height:10.8px;background:#e4e8fb;"></div>
<div class="a" style="left:365px;top:388.5px;width:0.7px;height:89.5px;background:#ececec;"></div>
<div class="a" style="left:365px;top:377.5px;width:0.7px;height:10.8px;background:#e4e8fb;"></div>
<div class="a" style="left:413px;top:388.5px;width:0.7px;height:89.5px;background:#ececec;"></div>
<div class="a" style="left:413px;top:377.5px;width:0.7px;height:10.8px;background:#e4e8fb;"></div>
<div class="a" style="left:489px;top:388.5px;width:0.7px;height:89.5px;background:#ececec;"></div>
<div class="a" style="left:489px;top:377.5px;width:0.7px;height:10.8px;background:#e4e8fb;"></div>
<div class="a" style="left:538px;top:388.5px;width:0.7px;height:89.5px;background:#ececec;"></div>
<div class="a" style="left:538px;top:377.5px;width:0.7px;height:10.8px;background:#e4e8fb;"></div>
<div class="a" style="left:596px;top:388.5px;width:0.7px;height:89.5px;background:#ececec;"></div>
<div class="a" style="left:596px;top:377.5px;width:0.7px;height:10.8px;background:#e4e8fb;"></div>
<div class="a" style="left:656px;top:388.5px;width:0.7px;height:89.5px;background:#ececec;"></div>
<div class="a" style="left:656px;top:377.5px;width:0.7px;height:10.8px;background:#e4e8fb;"></div>
<div class="a" style="left:717px;top:388.5px;width:0.7px;height:89.5px;background:#ececec;"></div>
<div class="a" style="left:717px;top:377.5px;width:0.7px;height:10.8px;background:#e4e8fb;"></div>
<div class="t" style="top:390.69px;font-size:6.24px;color:#3a3a3a;left:107.50px;transform-origin:0 50%;transform:scaleX(0.8929);">MAN_HINH</div>
<div class="t" style="top:390.71px;font-size:6.20px;color:#3a3a3a;left:158.60px;transform-origin:0 50%;transform:scaleX(0.8929);">Màn hình Samsung</div>
<div class="t" style="top:390.71px;font-size:6.22px;color:#3a3a3a;left:265.20px;transform-origin:0 50%;transform:scaleX(0.8929);">KNVL</div>
<div class="t" style="top:390.71px;font-size:6.22px;color:#3a3a3a;left:319.20px;transform-origin:0 50%;transform:scaleX(0.8929);">1361</div>
<div class="t" style="top:390.71px;font-size:6.22px;color:#3a3a3a;left:367.00px;transform-origin:0 50%;transform:scaleX(0.8929);">152</div>
<div class="t" style="top:390.71px;font-size:6.22px;color:#3a3a3a;left:490.50px;transform-origin:0 50%;transform:scaleX(0.8929);">Chiếc</div>
<div class="t" style="top:390.71px;font-size:6.22px;color:#3a3a3a;left:292.40px;width:300px;text-align:right;transform-origin:100% 50%;transform:scaleX(0.8929);">1,00</div>
<div class="t" style="top:390.71px;font-size:6.22px;color:#3a3a3a;left:351.60px;width:300px;text-align:right;transform-origin:100% 50%;transform:scaleX(0.8929);">0</div>
<div class="t" style="top:390.71px;font-size:6.22px;color:#3a3a3a;left:413.00px;width:300px;text-align:right;transform-origin:100% 50%;transform:scaleX(0.8929);">0</div>
<div class="t" style="top:390.71px;font-size:6.22px;color:#3a3a3a;left:474.00px;width:300px;text-align:right;transform-origin:100% 50%;transform:scaleX(0.8929);">0</div>
<div class="a" style="left:104.5px;top:466px;width:682.0px;height:12px;background:#ebebeb;"></div>
<div class="a" style="left:154.8px;top:466px;width:0.7px;height:12px;background:#c8c8c8;"></div>
<div class="t" style="top:469.17px;font-size:6.09px;color:#3a3a3a;left:107.00px;transform-origin:0 50%;transform:scaleX(0.8929);">Số dòng = 1</div>
<div class="t" style="top:469.11px;font-size:6.22px;color:#3a3a3a;left:292.40px;width:300px;text-align:right;transform-origin:100% 50%;transform:scaleX(0.8929);">1,00</div>
<div class="t" style="top:469.11px;font-size:6.22px;color:#3a3a3a;left:413.00px;width:300px;text-align:right;transform-origin:100% 50%;transform:scaleX(0.8929);">0</div>
<div class="a" style="left:104.5px;top:478px;width:682.0px;height:11px;background:#ececec;"></div>
<div class="a" style="left:104.5px;top:482px;width:682.0px;height:4px;background:#f1f1ef;"></div>
<div class="a" style="left:104.5px;top:486px;width:682.0px;height:3px;background:#d3d8f2;"></div>
<div class="a" style="left:104.5px;top:478.8px;width:443.5px;height:10px;background:#c3ccf5;"></div>
<svg class="a" style="left:107px;top:481.8px" width="4" height="4" viewBox="0 0 4 4"><path d="M3.2 0.3 L0.6 2 L3.2 3.7Z" fill="#333"/></svg>
<svg class="a" style="left:746px;top:419px" width="36" height="36" viewBox="0 0 36 36"><circle cx="18.2" cy="18" r="16" fill="none" stroke="#fff" stroke-width="2" opacity="0.8"/><circle cx="18.2" cy="18" r="14.6" fill="#1f7ae0"/><circle cx="28.2" cy="8.4" r="2.2" fill="#fff"/><circle cx="28.2" cy="8.4" r="1.1" fill="#2f7fd8"/><circle cx="16" cy="16.3" r="3.6" fill="#fff"/><path d="M13.3 18.8 L12.3 21.5 L15.5 19.5Z" fill="#fff"/><circle cx="21.2" cy="20.5" r="3.9" fill="#1f7ae0"/><circle cx="21.2" cy="20.5" r="3.1" fill="#fff"/><path d="M23.5 22.5 L24.8 24.6 L21.8 23.4Z" fill="#fff"/></svg>
<div class="a" style="left:13.7px;top:488.7px;width:773px;height:2.3px;background:#14141c;"></div>
</div>
</body></html>
